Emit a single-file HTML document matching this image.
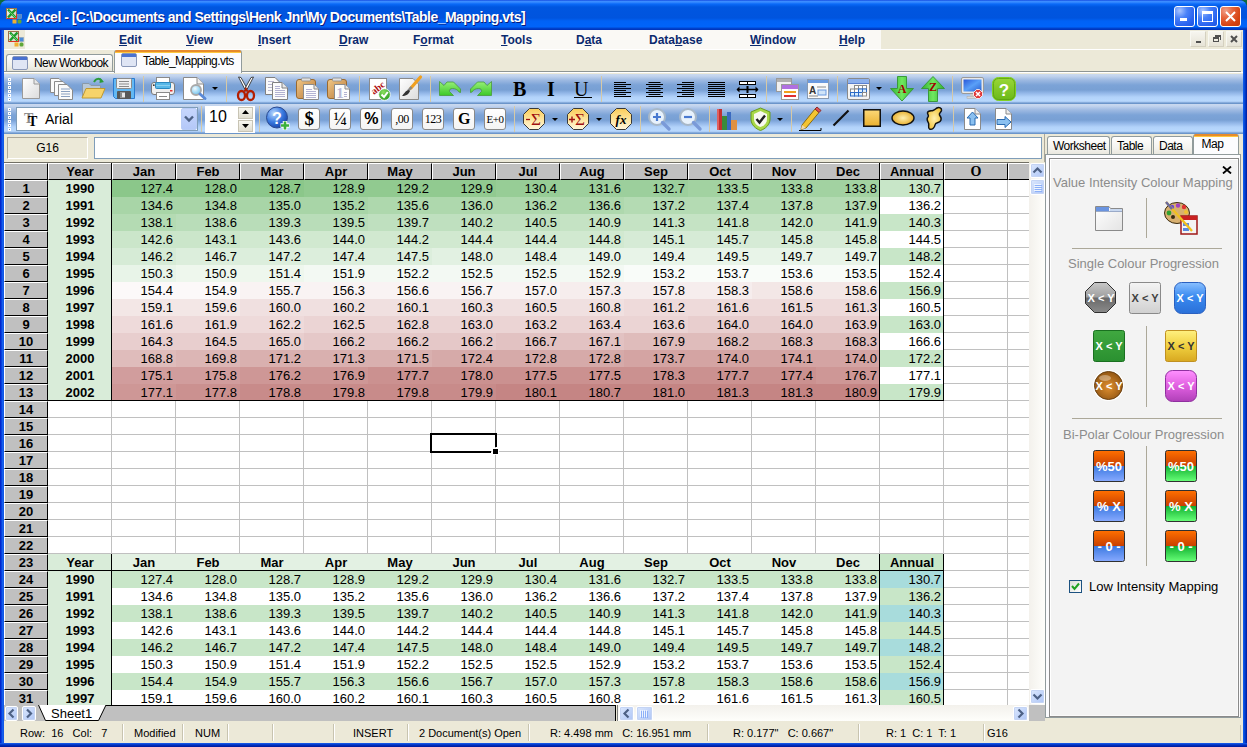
<!DOCTYPE html><html><head><meta charset="utf-8"><style>
*{margin:0;padding:0;box-sizing:border-box}
html,body{width:1247px;height:747px;overflow:hidden;background:#0d6a3e;font-family:"Liberation Sans",sans-serif;font-size:13px;color:#000}
.a{position:absolute}
.t{position:absolute;white-space:nowrap;line-height:1}
</style></head><body><div class="a" style="left:0px;top:0px;width:1247px;height:747px;border-radius:8px 8px 0 0;background:linear-gradient(90deg,#0019c4 0,#0a4ee6 2px,#1f6ff6 3px,#0842d6 4px,#0842d6 1243px,#1060f0 1243px,#0040d0 1245px,#001a9a 1247px)"></div>
<div class="a" style="left:0px;top:743px;width:1247px;height:4px;background:linear-gradient(#1a62f0,#0030c0 2px,#001a9a)"></div>
<div class="a" style="left:0px;top:0px;width:1247px;height:30px;border-radius:8px 8px 0 0;background:linear-gradient(#0838d8 0,#3d8cff 1px,#3a8cff 2px,#0a6af8 4px,#0056e0 7px,#0054de 18px,#0062f6 21px,#0064fa 27px,#0046d0 28px,#0030b8 30px)"></div>
<svg class="a" style="left:6px;top:8px" width="17" height="16" viewBox="0 0 17 16"><defs><linearGradient id="xs8" x1="0" y1="0" x2="1" y2="1"><stop offset="0" stop-color="#f4f8f0"/><stop offset="1" stop-color="#c8d0c0"/></linearGradient></defs>
<rect x="0.5" y="0.5" width="10" height="10" fill="url(#xs8)" stroke="#a0704a"/><path d="M1 10.5 H10.5 V6" stroke="#e03020" fill="none"/><path d="M2 1.5 L9.5 9.5 M9.5 1.5 L2 9.5" stroke="#1a9a2a" stroke-width="2.4"/><path d="M3 3 L10 10" stroke="#6ad06a" stroke-width="1"/>
<rect x="11.5" y="6.5" width="4" height="4" fill="#4a8ad8" stroke="#8aa0b8" stroke-width=".6"/><rect x="6.5" y="11.5" width="4" height="4" fill="#f0b030"/><rect x="11.5" y="11.5" width="4" height="4" rx="1.5" fill="#60a838"/></svg>
<div class="t" style="left:26px;top:9.5px;color:#fff;font-weight:bold;font-size:14px;text-shadow:1px 1px 0 #0a1a7a;letter-spacing:-0.52px">Accel - [C:\Documents and Settings\Henk Jnr\My Documents\Table_Mapping.vts]</div>
<div class="a" style="left:1174px;top:6px;width:21px;height:21px;border:1px solid #fff;border-radius:3px;background:radial-gradient(circle at 25% 20%,#a8c4ff 0,#4a82f8 35%,#2a64f0 70%,#1c54e0 100%)"></div>
<div class="a" style="left:1197px;top:6px;width:21px;height:21px;border:1px solid #fff;border-radius:3px;background:radial-gradient(circle at 25% 20%,#a8c4ff 0,#4a82f8 35%,#2a64f0 70%,#1c54e0 100%)"></div>
<div class="a" style="left:1220px;top:6px;width:21px;height:21px;border:1px solid #fff;border-radius:3px;background:radial-gradient(circle at 25% 20%,#f0a08a 0,#e6643c 35%,#d64312 70%,#c63a0a 100%)"></div>
<div class="a" style="left:1180px;top:18px;width:7px;height:3px;background:#fff"></div>
<div class="a" style="left:1202px;top:11px;width:11px;height:11px;border:1px solid #fff;border-top-width:3px"></div>
<svg class="a" style="left:1220px;top:6px" width="21" height="21"><path d="M6 6 L15 15 M15 6 L6 15" stroke="#fff" stroke-width="2"/></svg>
<div class="a" style="left:4px;top:30px;width:1239px;height:713px;background:#ece9d8"></div>
<div class="a" style="left:4px;top:30px;width:877px;height:19px;background:#faf9f5"></div>
<div class="a" style="left:4px;top:49px;width:1239px;height:1px;background:#fff"></div>
<div class="a" style="left:4px;top:30px;width:21px;height:19px;background:#ece9d8"></div>
<svg class="a" style="left:8px;top:31px" width="17" height="16" viewBox="0 0 17 16"><defs><linearGradient id="xs31" x1="0" y1="0" x2="1" y2="1"><stop offset="0" stop-color="#f4f8f0"/><stop offset="1" stop-color="#c8d0c0"/></linearGradient></defs>
<rect x="0.5" y="0.5" width="10" height="10" fill="url(#xs31)" stroke="#a0704a"/><path d="M1 10.5 H10.5 V6" stroke="#e03020" fill="none"/><path d="M2 1.5 L9.5 9.5 M9.5 1.5 L2 9.5" stroke="#1a9a2a" stroke-width="2.4"/><path d="M3 3 L10 10" stroke="#6ad06a" stroke-width="1"/>
<rect x="11.5" y="6.5" width="4" height="4" fill="#4a8ad8" stroke="#8aa0b8" stroke-width=".6"/><rect x="6.5" y="11.5" width="4" height="4" fill="#f0b030"/><rect x="11.5" y="11.5" width="4" height="4" rx="1.5" fill="#60a838"/></svg>
<div class="t" style="left:53px;top:34px;color:#0b2a6e;font-weight:bold;font-size:12px"><u>F</u>ile</div>
<div class="t" style="left:119px;top:34px;color:#0b2a6e;font-weight:bold;font-size:12px"><u>E</u>dit</div>
<div class="t" style="left:186px;top:34px;color:#0b2a6e;font-weight:bold;font-size:12px"><u>V</u>iew</div>
<div class="t" style="left:258px;top:34px;color:#0b2a6e;font-weight:bold;font-size:12px"><u>I</u>nsert</div>
<div class="t" style="left:339px;top:34px;color:#0b2a6e;font-weight:bold;font-size:12px"><u>D</u>raw</div>
<div class="t" style="left:413px;top:34px;color:#0b2a6e;font-weight:bold;font-size:12px">F<u>o</u>rmat</div>
<div class="t" style="left:501px;top:34px;color:#0b2a6e;font-weight:bold;font-size:12px"><u>T</u>ools</div>
<div class="t" style="left:576px;top:34px;color:#0b2a6e;font-weight:bold;font-size:12px">D<u>a</u>ta</div>
<div class="t" style="left:649px;top:34px;color:#0b2a6e;font-weight:bold;font-size:12px">Data<u>b</u>ase</div>
<div class="t" style="left:750px;top:34px;color:#0b2a6e;font-weight:bold;font-size:12px"><u>W</u>indow</div>
<div class="t" style="left:839px;top:34px;color:#0b2a6e;font-weight:bold;font-size:12px"><u>H</u>elp</div>
<div class="a" style="left:1190px;top:31px;width:16px;height:16px;background:linear-gradient(#f6f5ef,#e6e3d6);border:1px solid #f8f8f2;border-right-color:#d4d0c0;border-bottom-color:#d4d0c0"></div>
<div class="a" style="left:1208px;top:31px;width:16px;height:16px;background:linear-gradient(#f6f5ef,#e6e3d6);border:1px solid #f8f8f2;border-right-color:#d4d0c0;border-bottom-color:#d4d0c0"></div>
<div class="a" style="left:1226px;top:31px;width:16px;height:16px;background:linear-gradient(#f6f5ef,#e6e3d6);border:1px solid #f8f8f2;border-right-color:#d4d0c0;border-bottom-color:#d4d0c0"></div>
<div class="a" style="left:1196px;top:41px;width:5px;height:2px;background:#505050"></div>
<div class="a" style="left:1213px;top:37px;width:6px;height:5px;border:1px solid #505050;border-top-width:2px"></div>
<div class="a" style="left:1215px;top:35px;width:6px;height:5px;border-top:2px solid #505050;border-right:1px solid #505050"></div>
<svg class="a" style="left:1226px;top:31px" width="16" height="16"><path d="M5 5 L11 11 M11 5 L5 11" stroke="#505050" stroke-width="2"/></svg>
<div class="a" style="left:4px;top:71px;width:1237px;height:1px;background:#8e9594"></div>
<div class="a" style="left:4px;top:72px;width:1239px;height:1px;background:#fff"></div>
<div class="a" style="left:6px;top:54px;width:107px;height:17px;background:linear-gradient(#fefefe,#f0efe8 70%,#e6e3d8);border:1px solid #919b9c;border-bottom:none;border-radius:3px 3px 0 0"></div>
<svg class="a" style="left:12px;top:56px" width="16" height="14"><rect x="0.5" y="0.5" width="15" height="13" rx="1.5" fill="#dfe5f4" stroke="#8a98b8"/><rect x="1" y="1" width="14" height="3" fill="#4a72d0"/></svg>
<div class="t" style="left:34px;top:57px;font-size:12px;color:#000;letter-spacing:-0.6px">New Workbook</div>
<div class="a" style="left:114px;top:50px;width:128px;height:23px;background:#fcfcfe;border:1px solid #919b9c;border-bottom:none;border-radius:3px 3px 0 0"></div>
<div class="a" style="left:115px;top:50px;width:126px;height:2px;background:#e68b2c;border-radius:2px 2px 0 0"></div>
<div class="a" style="left:115px;top:52px;width:126px;height:1px;background:#ffc73c"></div>
<svg class="a" style="left:121px;top:53px" width="16" height="14"><rect x="0.5" y="0.5" width="15" height="13" rx="1.5" fill="#dfe5f4" stroke="#8a98b8"/><rect x="1" y="1" width="14" height="3" fill="#4a72d0"/></svg>
<div class="t" style="left:143px;top:55px;font-size:12px;color:#000;letter-spacing:-0.55px">Table_Mapping.vts</div>
<div class="a" style="left:4px;top:74px;width:1239px;height:30px;background:linear-gradient(#cad9ef 0,#c2d4ee 2px,#9ebae2 6px,#7ca3d7 11px,#78a0d4 16px,#92b6e8 19px,#b2d2fa 23px,#b8d8fd 27px,#a4c4ee 28px,#6b95ca 29px,#6b95ca 30px)"></div>
<div class="a" style="left:4px;top:104px;width:1239px;height:30px;background:linear-gradient(#cad9ef 0,#c2d4ee 2px,#9ebae2 6px,#7ca3d7 11px,#78a0d4 16px,#92b6e8 19px,#b2d2fa 23px,#b8d8fd 27px,#a4c4ee 28px,#6b95ca 29px,#6b95ca 30px)"></div>
<svg class="a" style="left:8px;top:78px" width="4" height="24"><rect x="0" y="0" width="3" height="3" fill="#fff"/><rect x="1" y="1" width="1" height="1" fill="#7890b0"/><rect x="0" y="4" width="3" height="3" fill="#fff"/><rect x="1" y="5" width="1" height="1" fill="#7890b0"/><rect x="0" y="8" width="3" height="3" fill="#fff"/><rect x="1" y="9" width="1" height="1" fill="#7890b0"/><rect x="0" y="12" width="3" height="3" fill="#fff"/><rect x="1" y="13" width="1" height="1" fill="#7890b0"/><rect x="0" y="16" width="3" height="3" fill="#fff"/><rect x="1" y="17" width="1" height="1" fill="#7890b0"/><rect x="0" y="20" width="3" height="3" fill="#fff"/><rect x="1" y="21" width="1" height="1" fill="#7890b0"/></svg>
<svg class="a" style="left:8px;top:108px" width="4" height="24"><rect x="0" y="0" width="3" height="3" fill="#fff"/><rect x="1" y="1" width="1" height="1" fill="#7890b0"/><rect x="0" y="4" width="3" height="3" fill="#fff"/><rect x="1" y="5" width="1" height="1" fill="#7890b0"/><rect x="0" y="8" width="3" height="3" fill="#fff"/><rect x="1" y="9" width="1" height="1" fill="#7890b0"/><rect x="0" y="12" width="3" height="3" fill="#fff"/><rect x="1" y="13" width="1" height="1" fill="#7890b0"/><rect x="0" y="16" width="3" height="3" fill="#fff"/><rect x="1" y="17" width="1" height="1" fill="#7890b0"/><rect x="0" y="20" width="3" height="3" fill="#fff"/><rect x="1" y="21" width="1" height="1" fill="#7890b0"/></svg>
<div class="a" style="left:143px;top:76px;width:1px;height:26px;background:#d6c9a6"></div>
<div class="a" style="left:226px;top:76px;width:1px;height:26px;background:#d6c9a6"></div>
<div class="a" style="left:359px;top:76px;width:1px;height:26px;background:#d6c9a6"></div>
<div class="a" style="left:430px;top:76px;width:1px;height:26px;background:#d6c9a6"></div>
<div class="a" style="left:601px;top:76px;width:1px;height:26px;background:#d6c9a6"></div>
<div class="a" style="left:766px;top:76px;width:1px;height:26px;background:#d6c9a6"></div>
<div class="a" style="left:837px;top:76px;width:1px;height:26px;background:#d6c9a6"></div>
<div class="a" style="left:952px;top:76px;width:1px;height:26px;background:#d6c9a6"></div>
<div class="a" style="left:201px;top:106px;width:1px;height:26px;background:#d6c9a6"></div>
<div class="a" style="left:259px;top:106px;width:1px;height:26px;background:#d6c9a6"></div>
<div class="a" style="left:514px;top:106px;width:1px;height:26px;background:#d6c9a6"></div>
<div class="a" style="left:640px;top:106px;width:1px;height:26px;background:#d6c9a6"></div>
<div class="a" style="left:709px;top:106px;width:1px;height:26px;background:#d6c9a6"></div>
<div class="a" style="left:791px;top:106px;width:1px;height:26px;background:#d6c9a6"></div>
<div class="a" style="left:953px;top:106px;width:1px;height:26px;background:#d6c9a6"></div>
<svg class="a" style="left:21px;top:77px;overflow:visible" width="20" height="23" viewBox="0 0 20 23"><defs><linearGradient id="pg" x1="0" y1="0" x2="1" y2="1"><stop offset="0" stop-color="#fff"/><stop offset="1" stop-color="#dcdcdc"/></linearGradient></defs><path d="M1.5 1.5 H13 L18.5 7 V21.5 H1.5 Z" fill="url(#pg)" stroke="#9a9a9a"/><path d="M13 1.5 V7 H18.5" fill="#e8e8e8" stroke="#9a9a9a"/></svg>
<svg class="a" style="left:49px;top:77px;overflow:visible" width="25" height="23" viewBox="0 0 25 23"><path d="M1.5 1.5 H10 L14 5.5 V15.5 H1.5 Z" fill="#fafafa" stroke="#8a8a8a"/><path d="M5.5 4.5 H14 L18 8.5 V18.5 H5.5 Z" fill="#fafafa" stroke="#8a8a8a"/><path d="M9.5 7.5 H18 L23.5 13 V22.5 H9.5 Z" fill="#fafafa" stroke="#8a8a8a"/><path d="M12 12h9M12 14.5h9M12 17h9M12 19.5h9" stroke="#8aa0c0"/></svg>
<svg class="a" style="left:81px;top:77px;overflow:visible" width="25" height="23" viewBox="0 0 25 23"><path d="M1.5 6.5 H8 L10 8.5 H19.5 V20.5 H1.5 Z" fill="#b8c8d8" stroke="#8a9aa8"/><path d="M1 21 L5 11.5 H24 L20 21 Z" fill="#f6d36a" stroke="#c09a30"/><path d="M13 5 C15 1 19 1 21 4" stroke="#2a9a3a" stroke-width="2" fill="none"/><path d="M19 1 L23 5 L18.5 6 Z" fill="#2a9a3a"/></svg>
<svg class="a" style="left:112px;top:77px;overflow:visible" width="24" height="23" viewBox="0 0 24 23"><path d="M1.5 1.5 H22.5 V21.5 H3.5 L1.5 19.5 Z" fill="#62b8f4" stroke="#2a7ad0"/><rect x="4.5" y="1.5" width="15" height="10" rx="1" fill="#f0f0f0" stroke="#8a8a8a"/><path d="M7 4.5h10M7 7h10M7 9.5h10" stroke="#8a8a8a"/><rect x="5" y="14" width="14" height="8" rx="1" fill="#585858"/><rect x="8" y="15.5" width="5" height="5" fill="#e8e8e8"/><rect x="8" y="15.5" width="2" height="5" fill="#888"/></svg>
<svg class="a" style="left:151px;top:77px;overflow:visible" width="24" height="23" viewBox="0 0 24 23"><rect x="5.5" y="0.5" width="13" height="7" fill="#fff" stroke="#8a8a8a"/><rect x="0.5" y="5.5" width="23" height="12" rx="2.5" fill="#f0f0f0" stroke="#7a7a7a"/><rect x="4.5" y="5.5" width="15" height="6" rx="1" fill="#58b8e8" stroke="#2a88c0"/><path d="M5 8.5 H19" stroke="#8ad0f0"/><rect x="5.5" y="15.5" width="13" height="7" fill="#fff" stroke="#8a8a8a"/><path d="M8 19.5h8" stroke="#888"/><rect x="19" y="13" width="2.5" height="1.5" fill="#e03030"/><circle cx="2.8" cy="8.2" r="0.9" fill="#333"/></svg>
<svg class="a" style="left:183px;top:77px;overflow:visible" width="25" height="24" viewBox="0 0 25 24"><path d="M0.5 0.5 H14 L20.5 7 V22.5 H0.5 Z" fill="#fff" stroke="#8a8a8a"/><path d="M14 0.5 V7 H20.5" fill="#eee" stroke="#8a8a8a"/><defs><radialGradient id="lens" cx=".4" cy=".35" r=".6"><stop offset="0" stop-color="#f0faff"/><stop offset="1" stop-color="#7ac8f0"/></radialGradient></defs><circle cx="13" cy="13" r="5" fill="url(#lens)" stroke="#a8a8a8" stroke-width="1.8"/><path d="M17 17 L22 21.5" stroke="#5a8ad8" stroke-width="3" stroke-linecap="round"/></svg>
<svg class="a" style="left:212px;top:87px;overflow:visible" width="6" height="3" viewBox="0 0 6 3"><path d="M0 0 H6 L3 3 Z" fill="#000"/></svg>
<svg class="a" style="left:236px;top:76px;overflow:visible" width="20" height="26" viewBox="0 0 20 26"><path d="M2.5 1 L5 1.5 L11 12.5 L9 13.5 Z" fill="#fff" stroke="#333" stroke-width="0.9"/><path d="M17.5 1 L15 1.5 L9 12.5 L11 13.5 Z" fill="#fff" stroke="#333" stroke-width="0.9"/><ellipse cx="5.5" cy="19.5" rx="3.5" ry="4.5" fill="none" stroke="#b41e00" stroke-width="2.3"/><ellipse cx="14.5" cy="19.5" rx="3.5" ry="4.5" fill="none" stroke="#b41e00" stroke-width="2.3"/><path d="M8.5 15.5 L10 13 L11.5 15.5" stroke="#b41e00" stroke-width="2" fill="none"/></svg>
<svg class="a" style="left:265px;top:77px;overflow:visible" width="24" height="23" viewBox="0 0 24 23"><path d="M0.5 0.5 H10 L14 4.5 V17.5 H0.5 Z" fill="#fafafa" stroke="#808080"/><path d="M3 4.5h6M3 7.5h6M3 10.5h6M3 13.5h6" stroke="#b8b8d0"/><path d="M7.5 5.5 H17 L22.5 11 V22.5 H7.5 Z" fill="#fbfbfb" stroke="#808080"/><path d="M17 5.5 V11 H22.5" fill="#e8e8e8" stroke="#808080"/><path d="M10 9.5h5M10 11.5h5M10 13.5h10M10 15.5h10M10 17.5h10M10 19.5h10" stroke="#a0a0c8" stroke-width="0.8"/></svg>
<svg class="a" style="left:296px;top:78px;overflow:visible" width="24" height="23" viewBox="0 0 24 23"><defs><linearGradient id="pc296" x1="0" y1="0" x2="1" y2="1"><stop offset="0" stop-color="#f0c888"/><stop offset="1" stop-color="#b87838"/></linearGradient></defs><rect x="0.5" y="1.5" width="19" height="19" rx="2.5" fill="url(#pc296)" stroke="#9a6a30"/><rect x="5.5" y="0" width="9" height="3" rx="1" fill="#e0e0e0" stroke="#8a8a8a" stroke-width=".8"/><path d="M7.5 6.5 H18 L22.5 11 V21.5 H7.5 Z" fill="#fcfcfc" stroke="#8a8a8a"/><path d="M18 6.5 V11 H22.5" fill="#e8e8e8" stroke="#8a8a8a"/><path d="M10 11.5h6M10 13.5h10M10 15.5h10M10 17.5h10M10 19.5h10" stroke="#a0a0c8" stroke-width=".8"/></svg>
<svg class="a" style="left:327px;top:78px;overflow:visible" width="24" height="23" viewBox="0 0 24 23"><defs><linearGradient id="pc327" x1="0" y1="0" x2="1" y2="1"><stop offset="0" stop-color="#f0c888"/><stop offset="1" stop-color="#b87838"/></linearGradient></defs><rect x="0.5" y="1.5" width="19" height="19" rx="2.5" fill="url(#pc327)" stroke="#9a6a30"/><rect x="5.5" y="0" width="9" height="3" rx="1" fill="#e0e0e0" stroke="#8a8a8a" stroke-width=".8"/><path d="M7.5 6.5 H18 L22.5 11 V21.5 H7.5 Z" fill="#fcfcfc" stroke="#8a8a8a"/><path d="M18 6.5 V11 H22.5" fill="#e8e8e8" stroke="#8a8a8a"/><text x="13" y="20" font-family="Liberation Serif" font-weight="bold" font-size="15" fill="#b8b8d8" text-anchor="middle">1</text><path d="M17 14.5h3M17 16.5h3M17 18.5h3" stroke="#a0a0c8" stroke-width=".8"/></svg>
<svg class="a" style="left:369px;top:78px;overflow:visible" width="24" height="23" viewBox="0 0 24 23"><rect x="0.5" y="0.5" width="17" height="21" fill="#fff" stroke="#8a8a8a"/><text x="9" y="13" font-family="Liberation Serif" font-weight="bold" font-size="10" fill="#b01010" text-anchor="middle" transform="rotate(-38 9 10)">abc</text><defs><radialGradient id="ck" cx=".4" cy=".3" r=".7"><stop offset="0" stop-color="#8ae060"/><stop offset="1" stop-color="#2a9a20"/></radialGradient></defs><circle cx="15.5" cy="16.5" r="5.8" fill="url(#ck)" stroke="#fff" stroke-width=".8"/><path d="M12.5 16.5 L15 19 L18.8 14" stroke="#fff" stroke-width="2" fill="none"/></svg>
<svg class="a" style="left:399px;top:76px;overflow:visible" width="23" height="25" viewBox="0 0 23 25"><defs><linearGradient id="fp" x1="0" y1="0" x2="1" y2="1"><stop offset="0" stop-color="#fff"/><stop offset="1" stop-color="#dcdcdc"/></linearGradient></defs><path d="M0.5 2.5 H14 L19.5 8 V23.5 H0.5 Z" fill="url(#fp)" stroke="#8a8a8a"/><path d="M21.5 1 L12 12" stroke="#f0a020" stroke-width="3.2" stroke-linecap="round"/><path d="M12.5 11 L9 15" stroke="#888" stroke-width="2.6"/><path d="M9.5 14 C6 15 5 18 3 20 C7 20 10 18 11 15 Z" fill="#333"/></svg>
<svg width="0" height="0" style="position:absolute"><defs><linearGradient id="ug" x1="0" y1="0" x2="0" y2="1"><stop offset="0" stop-color="#98f078"/><stop offset="1" stop-color="#3cc828"/></linearGradient></defs></svg>
<svg class="a" style="left:439px;top:81px;overflow:visible" width="23" height="16" viewBox="0 0 23 16"><path d="M0.5 0.5 L5 4.5 L8 1 H14.5 L21.5 8 V11.5 L20 11 C18.5 8.5 16 7.5 13.5 7.5 C11.5 7.5 10 8.5 10.5 10.5 L14.5 14.5 H0.5 Z" fill="url(#ug)" stroke="#4a9a3a" stroke-width="0.8"/></svg>
<svg class="a" style="left:470px;top:81px;overflow:visible" width="23" height="16" viewBox="0 0 23 16"><g transform="translate(22 0) scale(-1 1)"><path d="M0.5 0.5 L5 4.5 L8 1 H14.5 L21.5 8 V11.5 L20 11 C18.5 8.5 16 7.5 13.5 7.5 C11.5 7.5 10 8.5 10.5 10.5 L14.5 14.5 H0.5 Z" fill="url(#ug)" stroke="#4a9a3a" stroke-width="0.8"/></g></svg>
<div class="t" style="left:513px;top:79px;font-family:&#39;Liberation Serif&#39;,serif;font-weight:bold;font-size:20px">B</div>
<div class="t" style="left:547px;top:79px;font-family:&#39;Liberation Serif&#39;,serif;font-weight:bold;font-size:20px">I</div>
<div class="t" style="left:574px;top:79px;font-family:&#39;Liberation Serif&#39;,serif;font-size:20px">U</div>
<div class="a" style="left:574px;top:97px;width:18px;height:1px;background:#000"></div>
<svg class="a" style="left:614px;top:82px;overflow:visible" width="17" height="15" viewBox="0 0 17 15"><rect x="0" y="0" width="12" height="1" fill="#000"/><rect x="0" y="2" width="17" height="1" fill="#000"/><rect x="0" y="4" width="12" height="1" fill="#000"/><rect x="0" y="6" width="17" height="1" fill="#000"/><rect x="0" y="8" width="12" height="1" fill="#000"/><rect x="0" y="10" width="17" height="1" fill="#000"/><rect x="0" y="12" width="12" height="1" fill="#000"/><rect x="0" y="14" width="17" height="1" fill="#000"/></svg>
<svg class="a" style="left:646px;top:82px;overflow:visible" width="17" height="15" viewBox="0 0 17 15"><rect x="2.5" y="0" width="12" height="1" fill="#000"/><rect x="0.0" y="2" width="17" height="1" fill="#000"/><rect x="2.5" y="4" width="12" height="1" fill="#000"/><rect x="0.0" y="6" width="17" height="1" fill="#000"/><rect x="2.5" y="8" width="12" height="1" fill="#000"/><rect x="0.0" y="10" width="17" height="1" fill="#000"/><rect x="2.5" y="12" width="12" height="1" fill="#000"/><rect x="0.0" y="14" width="17" height="1" fill="#000"/></svg>
<svg class="a" style="left:677px;top:82px;overflow:visible" width="17" height="15" viewBox="0 0 17 15"><rect x="5" y="0" width="12" height="1" fill="#000"/><rect x="0" y="2" width="17" height="1" fill="#000"/><rect x="5" y="4" width="12" height="1" fill="#000"/><rect x="0" y="6" width="17" height="1" fill="#000"/><rect x="5" y="8" width="12" height="1" fill="#000"/><rect x="0" y="10" width="17" height="1" fill="#000"/><rect x="5" y="12" width="12" height="1" fill="#000"/><rect x="0" y="14" width="17" height="1" fill="#000"/></svg>
<svg class="a" style="left:708px;top:82px;overflow:visible" width="17" height="15" viewBox="0 0 17 15"><rect x="0" y="0" width="17" height="1" fill="#000"/><rect x="0" y="2" width="17" height="1" fill="#000"/><rect x="0" y="4" width="17" height="1" fill="#000"/><rect x="0" y="6" width="17" height="1" fill="#000"/><rect x="0" y="8" width="17" height="1" fill="#000"/><rect x="0" y="10" width="17" height="1" fill="#000"/><rect x="0" y="12" width="17" height="1" fill="#000"/><rect x="0" y="14" width="17" height="1" fill="#000"/></svg>
<svg class="a" style="left:736px;top:81px;overflow:visible" width="23" height="17" viewBox="0 0 23 17"><rect x="3.5" y="0.5" width="16" height="3" fill="#fff" stroke="#000"/><rect x="3.5" y="13.5" width="16" height="3" fill="#fff" stroke="#000"/><path d="M11.5 0 V4 M11.5 13 V17" stroke="#000"/><path d="M1 8.5 H22" stroke="#000" stroke-width="1.4"/><path d="M0.5 8.5 L3.5 5.5 V11.5 Z M22.5 8.5 L19.5 5.5 V11.5 Z" fill="#000"/><rect x="10.5" y="5" width="2" height="7" fill="#000"/></svg>
<svg class="a" style="left:775px;top:77px;overflow:visible" width="24" height="24" viewBox="0 0 24 24"><rect x="1.5" y="1.5" width="15" height="13" fill="#f0f0f0" stroke="#9a9a9a"/><rect x="2" y="2" width="14" height="3" fill="#b0b0b0"/><rect x="6.5" y="7.5" width="17" height="15" fill="#fff" stroke="#9a9a9a"/><rect x="7" y="8" width="16" height="4" fill="#b070e0"/><rect x="9" y="14" width="12" height="2" fill="#f0a020"/><rect x="9" y="18" width="12" height="2" fill="#e03030"/></svg>
<svg class="a" style="left:806px;top:77px;overflow:visible" width="24" height="24" viewBox="0 0 24 24"><rect x="1.5" y="2.5" width="21" height="19" fill="#fafafa" stroke="#8a9ab0"/><rect x="2" y="3" width="20" height="3" fill="#6a9ae0"/><text x="3" y="17" font-family="Liberation Sans" font-weight="bold" font-size="10" fill="#333">A</text><path d="M11 10h9M3 19h9" stroke="#8a8a8a"/><rect x="12" y="13" width="8" height="5" fill="#d0e4f8" stroke="#6a9ae0"/></svg>
<svg class="a" style="left:847px;top:78px;overflow:visible" width="23" height="22" viewBox="0 0 23 22"><rect x="0.5" y="0.5" width="22" height="21" rx="1.5" fill="#f4f4f4" stroke="#8a8a8a"/><rect x="1" y="1" width="21" height="4" fill="#8cb0ec"/><path d="M1 5.5 H22" stroke="#5a80d0"/><rect x="7.5" y="7.5" width="4" height="3.5" fill="#fff" stroke="#8a8a8a" stroke-width="1"/><rect x="11.5" y="7.5" width="4" height="3.5" fill="#fff" stroke="#8a8a8a" stroke-width="1"/><rect x="15.5" y="7.5" width="4" height="3.5" fill="#fff" stroke="#8a8a8a" stroke-width="1"/><rect x="3.5" y="11.0" width="4" height="3.5" fill="#fff" stroke="#8a8a8a" stroke-width="1"/><rect x="7.5" y="11.0" width="4" height="3.5" fill="#fff" stroke="#8a8a8a" stroke-width="1"/><rect x="11.5" y="11.0" width="4" height="3.5" fill="#d8ecfc" stroke="#2a6ac8" stroke-width="1"/><rect x="15.5" y="11.0" width="4" height="3.5" fill="#d8ecfc" stroke="#2a6ac8" stroke-width="1"/><rect x="3.5" y="14.5" width="4" height="3.5" fill="#d8ecfc" stroke="#2a6ac8" stroke-width="1"/><rect x="7.5" y="14.5" width="4" height="3.5" fill="#d8ecfc" stroke="#2a6ac8" stroke-width="1"/><rect x="11.5" y="14.5" width="4" height="3.5" fill="#d8ecfc" stroke="#2a6ac8" stroke-width="1"/><rect x="15.5" y="14.5" width="4" height="3.5" fill="#fff" stroke="#8a8a8a" stroke-width="1"/></svg>
<svg class="a" style="left:876px;top:87px;overflow:visible" width="6" height="3" viewBox="0 0 6 3"><path d="M0 0 H6 L3 3 Z" fill="#000"/></svg>
<svg class="a" style="left:890px;top:76px;overflow:visible" width="25" height="26" viewBox="0 0 25 26"><defs><linearGradient id="sg" x1="0" y1="0" x2="1" y2="0"><stop offset="0" stop-color="#30b030"/><stop offset=".5" stop-color="#70e860"/><stop offset="1" stop-color="#30b030"/></linearGradient></defs><path d="M7.5 0.5 H16.5 V12.5 H23.5 L12 25 L0.5 12.5 H7.5 Z" fill="url(#sg)" stroke="#3a9a3a"/><text x="12" y="17" font-family="Liberation Serif" font-weight="bold" font-size="12" fill="#a00000" text-anchor="middle">A</text></svg>
<svg class="a" style="left:921px;top:76px;overflow:visible" width="25" height="26" viewBox="0 0 25 26"><path d="M7.5 25.5 H16.5 V12.5 H23.5 L12 0.5 L0.5 12.5 H7.5 Z" fill="url(#sg)" stroke="#3a9a3a"/><text x="12" y="15" font-family="Liberation Serif" font-weight="bold" font-size="12" fill="#a00000" text-anchor="middle">Z</text></svg>
<svg class="a" style="left:961px;top:77px;overflow:visible" width="25" height="24" viewBox="0 0 25 24"><defs><linearGradient id="scr" x1="0" y1="0" x2="1" y2="1"><stop offset="0" stop-color="#2a58d8"/><stop offset=".5" stop-color="#5aa0f8"/><stop offset="1" stop-color="#2a60d0"/></linearGradient></defs><rect x="0.5" y="0.5" width="22" height="16" rx="1.5" fill="#e8e8e8" stroke="#9a9a9a"/><rect x="2.5" y="2.5" width="18" height="12" fill="url(#scr)"/><rect x="9" y="17" width="5" height="3" fill="#c8c8c8"/><rect x="6" y="19.5" width="11" height="2" fill="#d8d8d8" stroke="#aaa" stroke-width=".5"/><path d="M15.5 12.5 L18.5 12.5 L21.5 15.5 V18.5 L18.5 21.5 H15.5 L12.5 18.5 V15.5 Z" fill="#e03838" stroke="#fff" stroke-width=".8"/><path d="M15 15 L19 19 M19 15 L15 19" stroke="#fff" stroke-width="1.6"/></svg>
<svg class="a" style="left:992px;top:77px;overflow:visible" width="24" height="24" viewBox="0 0 24 24"><defs><linearGradient id="hg" x1="0" y1="0" x2="0" y2="1"><stop offset="0" stop-color="#9ad838"/><stop offset="1" stop-color="#6ab818"/></linearGradient></defs><rect x="0.5" y="0.5" width="23" height="23" rx="6" fill="url(#hg)" stroke="#80d020"/><rect x="1.5" y="1.5" width="21" height="21" rx="5" fill="none" stroke="#5aa010" stroke-width=".8"/><text x="12" y="19" font-family="Liberation Sans" font-weight="bold" font-size="17" fill="#fff" text-anchor="middle">?</text></svg>
<div class="a" style="left:16px;top:107px;width:182px;height:24px;background:#fff;border:1px solid #7f9db9"></div>
<div class="a" style="left:181px;top:108px;width:16px;height:22px;background:linear-gradient(#c6d6fc,#b4c8f8);border:1px solid #b8ccf6;border-radius:2px"></div>
<svg class="a" style="left:184px;top:115px;overflow:visible" width="10" height="7" viewBox="0 0 10 7"><path d="M1 1.5 L5 5.5 L9 1.5" stroke="#4d6185" stroke-width="2.4" fill="none"/></svg>
<div class="t" style="left:24px;top:112px;font-family:&#39;Liberation Serif&#39;,serif;font-size:14px;font-weight:bold;color:#8a8a8a">T</div>
<div class="t" style="left:28px;top:115px;font-family:&#39;Liberation Serif&#39;,serif;font-size:14px;font-weight:bold;color:#000">T</div>
<div class="t" style="left:45px;top:112px;font-size:14px;color:#000">Arial</div>
<div class="a" style="left:205px;top:106px;width:50px;height:27px;background:#fff"></div>
<div class="t" style="left:209px;top:109px;font-size:16px;color:#000">10</div>
<div class="a" style="left:238px;top:107px;width:15px;height:12px;background:linear-gradient(#f8f7f0,#e0ddd0);border:1px solid #c8c4b4"></div>
<div class="a" style="left:238px;top:120px;width:15px;height:12px;background:linear-gradient(#f8f7f0,#e0ddd0);border:1px solid #c8c4b4"></div>
<svg class="a" style="left:242px;top:110px;overflow:visible" width="7" height="4" viewBox="0 0 7 4"><path d="M0 4 L3.5 0 L7 4 Z" fill="#000"/></svg>
<svg class="a" style="left:242px;top:124px;overflow:visible" width="7" height="4" viewBox="0 0 7 4"><path d="M0 0 L3.5 4 L7 0 Z" fill="#000"/></svg>
<svg class="a" style="left:266px;top:106px;overflow:visible" width="24" height="25" viewBox="0 0 24 25"><defs><radialGradient id="hb" cx=".35" cy=".3" r=".7"><stop offset="0" stop-color="#b8d8ff"/><stop offset=".6" stop-color="#3a7ae0"/><stop offset="1" stop-color="#1a4ab0"/></radialGradient></defs><circle cx="11" cy="11.5" r="10.5" fill="url(#hb)" stroke="#2a4a90"/><text x="11" y="18" font-family="Liberation Sans" font-weight="bold" font-size="16" fill="#fff" text-anchor="middle">?</text><path d="M19 15 V24 M14.5 19.5 H23.5" stroke="#fff" stroke-width="4.5"/><path d="M19 15.5 V23.5 M15 19.5 H23" stroke="#3ab03a" stroke-width="2.6"/></svg>
<div class="a" style="left:298px;top:108px;width:22px;height:22px;background:linear-gradient(#fff,#f4f4f4);border:1px solid #8a8a8a;border-radius:3px"></div>
<div class="a" style="left:298px;top:108px;width:22px;height:22px;line-height:22px;text-align:center;font-family:'Liberation Serif',serif;font-size:19px;font-weight:bold;white-space:nowrap;letter-spacing:-0.5px">$</div>
<div class="a" style="left:329px;top:108px;width:22px;height:22px;background:linear-gradient(#fff,#f4f4f4);border:1px solid #8a8a8a;border-radius:3px"></div>
<div class="a" style="left:329px;top:108px;width:22px;height:22px;line-height:22px;text-align:center;font-family:'Liberation Serif',serif;font-size:18px;font-weight:normal;white-space:nowrap;letter-spacing:-0.5px">¼</div>
<div class="a" style="left:360px;top:108px;width:22px;height:22px;background:linear-gradient(#fff,#f4f4f4);border:1px solid #8a8a8a;border-radius:3px"></div>
<div class="a" style="left:360px;top:108px;width:22px;height:22px;line-height:22px;text-align:center;font-family:'Liberation Sans',sans-serif;font-size:16px;font-weight:bold;white-space:nowrap;letter-spacing:-0.5px">%</div>
<div class="a" style="left:391px;top:108px;width:22px;height:22px;background:linear-gradient(#fff,#f4f4f4);border:1px solid #8a8a8a;border-radius:3px"></div>
<div class="a" style="left:391px;top:108px;width:22px;height:22px;line-height:22px;text-align:center;font-family:'Liberation Serif',serif;font-size:12px;font-weight:normal;white-space:nowrap;letter-spacing:-0.5px">,00</div>
<div class="a" style="left:422px;top:108px;width:22px;height:22px;background:linear-gradient(#fff,#f4f4f4);border:1px solid #8a8a8a;border-radius:3px"></div>
<div class="a" style="left:422px;top:108px;width:22px;height:22px;line-height:22px;text-align:center;font-family:'Liberation Serif',serif;font-size:12px;font-weight:normal;white-space:nowrap;letter-spacing:-0.5px">123</div>
<div class="a" style="left:453px;top:108px;width:22px;height:22px;background:linear-gradient(#fff,#f4f4f4);border:1px solid #8a8a8a;border-radius:3px"></div>
<div class="a" style="left:453px;top:108px;width:22px;height:22px;line-height:22px;text-align:center;font-family:'Liberation Serif',serif;font-size:16px;font-weight:bold;white-space:nowrap;letter-spacing:-0.5px">G</div>
<div class="a" style="left:484px;top:108px;width:22px;height:22px;background:linear-gradient(#fff,#f4f4f4);border:1px solid #8a8a8a;border-radius:3px"></div>
<div class="a" style="left:484px;top:108px;width:22px;height:22px;line-height:22px;text-align:center;font-family:'Liberation Serif',serif;font-size:11px;font-weight:normal;white-space:nowrap;letter-spacing:-0.5px">E+0</div>
<svg class="a" style="left:523px;top:108px;overflow:visible" width="22" height="22" viewBox="0 0 22 22"><defs><linearGradient id="og523" x1="0" y1="0" x2="0" y2="1"><stop offset="0" stop-color="#fbcc58"/><stop offset=".5" stop-color="#fde49c"/><stop offset="1" stop-color="#fff6dc"/></linearGradient></defs><path d="M6.5 0.5 H15.5 L21.5 6.5 V15.5 L15.5 21.5 H6.5 L0.5 15.5 V6.5 Z" fill="url(#og523)" stroke="#3a3a3a"/><path d="M3 11.5 H7" stroke="#a01010" stroke-width="1.3"/><text x="13" y="17" font-family="Liberation Serif" font-size="17" fill="#a01010" text-anchor="middle">Σ</text></svg>
<svg class="a" style="left:552px;top:118px;overflow:visible" width="6" height="3" viewBox="0 0 6 3"><path d="M0 0 H6 L3 3 Z" fill="#000"/></svg>
<svg class="a" style="left:567px;top:108px;overflow:visible" width="22" height="22" viewBox="0 0 22 22"><defs><linearGradient id="og567" x1="0" y1="0" x2="0" y2="1"><stop offset="0" stop-color="#fbcc58"/><stop offset=".5" stop-color="#fde49c"/><stop offset="1" stop-color="#fff6dc"/></linearGradient></defs><path d="M6.5 0.5 H15.5 L21.5 6.5 V15.5 L15.5 21.5 H6.5 L0.5 15.5 V6.5 Z" fill="url(#og567)" stroke="#3a3a3a"/><path d="M2 11.5 H8 M5 8.5 V14.5" stroke="#a01010" stroke-width="1.4"/><text x="13" y="17" font-family="Liberation Serif" font-size="17" fill="#a01010" text-anchor="middle">Σ</text></svg>
<svg class="a" style="left:596px;top:118px;overflow:visible" width="6" height="3" viewBox="0 0 6 3"><path d="M0 0 H6 L3 3 Z" fill="#000"/></svg>
<svg class="a" style="left:610px;top:108px;overflow:visible" width="22" height="22" viewBox="0 0 22 22"><defs><linearGradient id="og610" x1="0" y1="0" x2="0" y2="1"><stop offset="0" stop-color="#fbcc58"/><stop offset=".5" stop-color="#fde49c"/><stop offset="1" stop-color="#fff6dc"/></linearGradient></defs><path d="M6.5 0.5 H15.5 L21.5 6.5 V15.5 L15.5 21.5 H6.5 L0.5 15.5 V6.5 Z" fill="url(#og610)" stroke="#3a3a3a"/><text x="11" y="15.5" font-family="Liberation Serif" font-weight="bold" font-style="italic" font-size="13" fill="#000" text-anchor="middle">fx</text></svg>
<svg class="a" style="left:647px;top:107px;overflow:visible" width="24" height="24" viewBox="0 0 24 24"><circle cx="10" cy="10" r="8" fill="#e8f2fc" stroke="#a8b8c8" stroke-width="2"/><path d="M6 10 H14 M10 6 V14" stroke="#4a7ad0" stroke-width="2.2"/><path d="M15.5 15.5 L22 22" stroke="#7a9ad8" stroke-width="3.4" stroke-linecap="round"/></svg>
<svg class="a" style="left:678px;top:107px;overflow:visible" width="24" height="24" viewBox="0 0 24 24"><circle cx="10" cy="10" r="8" fill="#e8f2fc" stroke="#a8b8c8" stroke-width="2"/><path d="M6 10 H14" stroke="#4a7ad0" stroke-width="2.2"/><path d="M15.5 15.5 L22 22" stroke="#7a9ad8" stroke-width="3.4" stroke-linecap="round"/></svg>
<svg class="a" style="left:716px;top:107px;overflow:visible" width="24" height="24" viewBox="0 0 24 24"><rect x="1" y="2" width="5" height="21" fill="#c03030"/><rect x="6" y="9" width="5" height="14" fill="#3a8a3a"/><rect x="11" y="5" width="4" height="18" fill="#3a6ac0"/><rect x="15" y="13" width="6" height="10" fill="#e09040"/><rect x="1" y="2" width="2" height="21" fill="#e06060"/></svg>
<svg class="a" style="left:750px;top:107px;overflow:visible" width="21" height="24" viewBox="0 0 21 24"><path d="M10.5 1 L20 5 V12 C20 18 15 22 10.5 23.5 C6 22 1 18 1 12 V5 Z" fill="#a8d848" stroke="#6a9a20"/><path d="M10.5 4 L17 7 V12 C17 16 14 19 10.5 20 C7 19 4 16 4 12 V7 Z" fill="#f8f8f0"/><path d="M6.5 12 L9.5 15.5 L15 8.5" stroke="#222" stroke-width="2.4" fill="none"/></svg>
<svg class="a" style="left:777px;top:118px;overflow:visible" width="6" height="3" viewBox="0 0 6 3"><path d="M0 0 H6 L3 3 Z" fill="#000"/></svg>
<svg class="a" style="left:798px;top:106px;overflow:visible" width="24" height="26" viewBox="0 0 24 26"><path d="M4 19 L17 3 L21 6.5 L8 22 L3 23.5 Z" fill="#f4c430" stroke="#8a6a10"/><path d="M17 3 L19 1 L23 4.5 L21 6.5 Z" fill="#e05050" stroke="#8a2a2a"/><path d="M3 23.5 L4 19 L8 22 Z" fill="#f0d8b0"/><path d="M1 24.5 H23 V22" stroke="#000" stroke-width="1" fill="none"/></svg>
<svg class="a" style="left:832px;top:109px;overflow:visible" width="18" height="18" viewBox="0 0 18 18"><path d="M1.5 16.5 L16.5 1.5" stroke="#111" stroke-width="2.2"/></svg>
<svg class="a" style="left:863px;top:109px;overflow:visible" width="18" height="18" viewBox="0 0 18 18"><defs><linearGradient id="rg" x1="0" y1="0" x2="0" y2="1"><stop offset="0" stop-color="#fcd878"/><stop offset="1" stop-color="#e8b030"/></linearGradient></defs><rect x="0.75" y="0.75" width="16.5" height="16.5" fill="url(#rg)" stroke="#111" stroke-width="1.5"/></svg>
<svg class="a" style="left:891px;top:110px;overflow:visible" width="24" height="16" viewBox="0 0 24 16"><defs><radialGradient id="eg"><stop offset="0" stop-color="#fff0b0"/><stop offset="1" stop-color="#e8b030"/></radialGradient></defs><ellipse cx="12" cy="8" rx="11" ry="7" fill="url(#eg)" stroke="#111" stroke-width="1.4"/></svg>
<svg class="a" style="left:925px;top:107px;overflow:visible" width="19" height="24" viewBox="0 0 19 24"><defs><radialGradient id="bl" cx=".5" cy=".5" r=".6"><stop offset="0" stop-color="#fff0b0"/><stop offset="1" stop-color="#f0c030"/></radialGradient></defs><path d="M12 1 C14 0 17 1 16.5 3.5 C16 5.5 13.5 6 14.5 8 C16 10 17.5 12 15 14.5 C13 16.5 10.5 15 10 18 C9.5 21 7 23 4.5 22 C2.5 21 4.5 18 3.5 16 C2.5 14 1 12 3 10 C4.5 8.5 2 7 2.5 5.5 C3 3.5 6 4 8 3.5 C10 3 10.5 1.8 12 1 Z" fill="url(#bl)" stroke="#111" stroke-width="1.5"/></svg>
<svg class="a" style="left:963px;top:107px;overflow:visible" width="19" height="24" viewBox="0 0 19 24"><path d="M1.5 1.5 H12 L17.5 7 V22.5 H1.5 Z" fill="#fff" stroke="#8a8a8a"/><path d="M12 1.5 V7 H17.5" fill="#eee" stroke="#8a8a8a"/><path d="M9.5 5 L15 11 H12 V18 H7 V11 H4 Z" fill="#8ac0f0" stroke="#2a6ab0"/></svg>
<svg class="a" style="left:994px;top:107px;overflow:visible" width="19" height="24" viewBox="0 0 19 24"><path d="M1.5 1.5 H12 L17.5 7 V22.5 H1.5 Z" fill="#fff" stroke="#8a8a8a"/><path d="M12 1.5 V7 H17.5" fill="#eee" stroke="#8a8a8a"/><path d="M17 15 L11 20.5 V17.5 H3 V12.5 H11 V9.5 Z" fill="#8ac0f0" stroke="#2a6ab0"/></svg>
<div class="a" style="left:7px;top:137px;width:81px;height:22px;background:#ece9d8;border:1px solid #fff;border-top-color:#aca899;border-left-color:#aca899"></div>
<div class="a" style="left:7px;top:137px;width:81px;height:22px;line-height:22px;text-align:center;font-size:12px">G16</div>
<div class="a" style="left:94px;top:137px;width:948px;height:22px;background:#fff;border:1px solid #7f9db9"></div>
<div class="a" style="left:1044px;top:134px;width:1px;height:28px;background:#aca899"></div>
<div class="a" style="left:4px;top:162px;width:1025px;height:1px;background:#716f64"></div>
<div class="a" style="left:4px;top:163px;width:1025px;height:542px;overflow:hidden;background:#fff">
<div class="a" style="left:107px;top:0;width:1px;height:543px;background:#c0c0c0"></div><div class="a" style="left:171px;top:0;width:1px;height:543px;background:#c0c0c0"></div><div class="a" style="left:235px;top:0;width:1px;height:543px;background:#c0c0c0"></div><div class="a" style="left:299px;top:0;width:1px;height:543px;background:#c0c0c0"></div><div class="a" style="left:363px;top:0;width:1px;height:543px;background:#c0c0c0"></div><div class="a" style="left:427px;top:0;width:1px;height:543px;background:#c0c0c0"></div><div class="a" style="left:491px;top:0;width:1px;height:543px;background:#c0c0c0"></div><div class="a" style="left:555px;top:0;width:1px;height:543px;background:#c0c0c0"></div><div class="a" style="left:619px;top:0;width:1px;height:543px;background:#c0c0c0"></div><div class="a" style="left:683px;top:0;width:1px;height:543px;background:#c0c0c0"></div><div class="a" style="left:747px;top:0;width:1px;height:543px;background:#c0c0c0"></div><div class="a" style="left:811px;top:0;width:1px;height:543px;background:#c0c0c0"></div><div class="a" style="left:875px;top:0;width:1px;height:543px;background:#c0c0c0"></div><div class="a" style="left:939px;top:0;width:1px;height:543px;background:#c0c0c0"></div><div class="a" style="left:1003px;top:0;width:1px;height:543px;background:#c0c0c0"></div><div class="a" style="left:1067px;top:0;width:1px;height:543px;background:#c0c0c0"></div><div class="a" style="left:0;top:33px;width:1025px;height:1px;background:#c0c0c0"></div><div class="a" style="left:0;top:50px;width:1025px;height:1px;background:#c0c0c0"></div><div class="a" style="left:0;top:67px;width:1025px;height:1px;background:#c0c0c0"></div><div class="a" style="left:0;top:84px;width:1025px;height:1px;background:#c0c0c0"></div><div class="a" style="left:0;top:101px;width:1025px;height:1px;background:#c0c0c0"></div><div class="a" style="left:0;top:118px;width:1025px;height:1px;background:#c0c0c0"></div><div class="a" style="left:0;top:135px;width:1025px;height:1px;background:#c0c0c0"></div><div class="a" style="left:0;top:152px;width:1025px;height:1px;background:#c0c0c0"></div><div class="a" style="left:0;top:169px;width:1025px;height:1px;background:#c0c0c0"></div><div class="a" style="left:0;top:186px;width:1025px;height:1px;background:#c0c0c0"></div><div class="a" style="left:0;top:203px;width:1025px;height:1px;background:#c0c0c0"></div><div class="a" style="left:0;top:220px;width:1025px;height:1px;background:#c0c0c0"></div><div class="a" style="left:0;top:237px;width:1025px;height:1px;background:#c0c0c0"></div><div class="a" style="left:0;top:254px;width:1025px;height:1px;background:#c0c0c0"></div><div class="a" style="left:0;top:271px;width:1025px;height:1px;background:#c0c0c0"></div><div class="a" style="left:0;top:288px;width:1025px;height:1px;background:#c0c0c0"></div><div class="a" style="left:0;top:305px;width:1025px;height:1px;background:#c0c0c0"></div><div class="a" style="left:0;top:322px;width:1025px;height:1px;background:#c0c0c0"></div><div class="a" style="left:0;top:339px;width:1025px;height:1px;background:#c0c0c0"></div><div class="a" style="left:0;top:356px;width:1025px;height:1px;background:#c0c0c0"></div><div class="a" style="left:0;top:373px;width:1025px;height:1px;background:#c0c0c0"></div><div class="a" style="left:0;top:390px;width:1025px;height:1px;background:#c0c0c0"></div><div class="a" style="left:0;top:407px;width:1025px;height:1px;background:#c0c0c0"></div><div class="a" style="left:0;top:424px;width:1025px;height:1px;background:#c0c0c0"></div><div class="a" style="left:0;top:441px;width:1025px;height:1px;background:#c0c0c0"></div><div class="a" style="left:0;top:458px;width:1025px;height:1px;background:#c0c0c0"></div><div class="a" style="left:0;top:475px;width:1025px;height:1px;background:#c0c0c0"></div><div class="a" style="left:0;top:492px;width:1025px;height:1px;background:#c0c0c0"></div><div class="a" style="left:0;top:509px;width:1025px;height:1px;background:#c0c0c0"></div><div class="a" style="left:0;top:526px;width:1025px;height:1px;background:#c0c0c0"></div><div class="a" style="left:0;top:543px;width:1025px;height:1px;background:#c0c0c0"></div><div class="a" style="left:0;top:560px;width:1025px;height:1px;background:#c0c0c0"></div>
<div class="a" style="left:0px;top:0px;width:1025px;height:17px;background:#c0c0c0;border-top:1px solid #fff"></div>
<div class="a" style="left:44px;top:0px;width:64px;height:17px;border-left:1px solid #fff;border-top:1px solid #fff;border-right:1px solid #000;border-bottom:1px solid #000"></div>
<div class="a" style="left:44px;top:0px;width:64px;height:16px;line-height:17px;text-align:center;font-weight:bold;font-size:13px;">Year</div>
<div class="a" style="left:108px;top:0px;width:64px;height:17px;border-left:1px solid #fff;border-top:1px solid #fff;border-right:1px solid #000;border-bottom:1px solid #000"></div>
<div class="a" style="left:108px;top:0px;width:64px;height:16px;line-height:17px;text-align:center;font-weight:bold;font-size:13px;">Jan</div>
<div class="a" style="left:172px;top:0px;width:64px;height:17px;border-left:1px solid #fff;border-top:1px solid #fff;border-right:1px solid #000;border-bottom:1px solid #000"></div>
<div class="a" style="left:172px;top:0px;width:64px;height:16px;line-height:17px;text-align:center;font-weight:bold;font-size:13px;">Feb</div>
<div class="a" style="left:236px;top:0px;width:64px;height:17px;border-left:1px solid #fff;border-top:1px solid #fff;border-right:1px solid #000;border-bottom:1px solid #000"></div>
<div class="a" style="left:236px;top:0px;width:64px;height:16px;line-height:17px;text-align:center;font-weight:bold;font-size:13px;">Mar</div>
<div class="a" style="left:300px;top:0px;width:64px;height:17px;border-left:1px solid #fff;border-top:1px solid #fff;border-right:1px solid #000;border-bottom:1px solid #000"></div>
<div class="a" style="left:300px;top:0px;width:64px;height:16px;line-height:17px;text-align:center;font-weight:bold;font-size:13px;">Apr</div>
<div class="a" style="left:364px;top:0px;width:64px;height:17px;border-left:1px solid #fff;border-top:1px solid #fff;border-right:1px solid #000;border-bottom:1px solid #000"></div>
<div class="a" style="left:364px;top:0px;width:64px;height:16px;line-height:17px;text-align:center;font-weight:bold;font-size:13px;">May</div>
<div class="a" style="left:428px;top:0px;width:64px;height:17px;border-left:1px solid #fff;border-top:1px solid #fff;border-right:1px solid #000;border-bottom:1px solid #000"></div>
<div class="a" style="left:428px;top:0px;width:64px;height:16px;line-height:17px;text-align:center;font-weight:bold;font-size:13px;">Jun</div>
<div class="a" style="left:492px;top:0px;width:64px;height:17px;border-left:1px solid #fff;border-top:1px solid #fff;border-right:1px solid #000;border-bottom:1px solid #000"></div>
<div class="a" style="left:492px;top:0px;width:64px;height:16px;line-height:17px;text-align:center;font-weight:bold;font-size:13px;">Jul</div>
<div class="a" style="left:556px;top:0px;width:64px;height:17px;border-left:1px solid #fff;border-top:1px solid #fff;border-right:1px solid #000;border-bottom:1px solid #000"></div>
<div class="a" style="left:556px;top:0px;width:64px;height:16px;line-height:17px;text-align:center;font-weight:bold;font-size:13px;">Aug</div>
<div class="a" style="left:620px;top:0px;width:64px;height:17px;border-left:1px solid #fff;border-top:1px solid #fff;border-right:1px solid #000;border-bottom:1px solid #000"></div>
<div class="a" style="left:620px;top:0px;width:64px;height:16px;line-height:17px;text-align:center;font-weight:bold;font-size:13px;">Sep</div>
<div class="a" style="left:684px;top:0px;width:64px;height:17px;border-left:1px solid #fff;border-top:1px solid #fff;border-right:1px solid #000;border-bottom:1px solid #000"></div>
<div class="a" style="left:684px;top:0px;width:64px;height:16px;line-height:17px;text-align:center;font-weight:bold;font-size:13px;">Oct</div>
<div class="a" style="left:748px;top:0px;width:64px;height:17px;border-left:1px solid #fff;border-top:1px solid #fff;border-right:1px solid #000;border-bottom:1px solid #000"></div>
<div class="a" style="left:748px;top:0px;width:64px;height:16px;line-height:17px;text-align:center;font-weight:bold;font-size:13px;">Nov</div>
<div class="a" style="left:812px;top:0px;width:64px;height:17px;border-left:1px solid #fff;border-top:1px solid #fff;border-right:1px solid #000;border-bottom:1px solid #000"></div>
<div class="a" style="left:812px;top:0px;width:64px;height:16px;line-height:17px;text-align:center;font-weight:bold;font-size:13px;">Dec</div>
<div class="a" style="left:876px;top:0px;width:64px;height:17px;border-left:1px solid #fff;border-top:1px solid #fff;border-right:1px solid #000;border-bottom:1px solid #000"></div>
<div class="a" style="left:876px;top:0px;width:64px;height:16px;line-height:17px;text-align:center;font-weight:bold;font-size:13px;">Annual</div>
<div class="a" style="left:940px;top:0px;width:64px;height:17px;border-left:1px solid #fff;border-top:1px solid #fff;border-right:1px solid #000;border-bottom:1px solid #000"></div>
<div class="a" style="left:940px;top:0px;width:64px;height:16px;line-height:17px;text-align:center;font-weight:bold;font-size:13px;font-family:&#39;Liberation Serif&#39;,serif;font-size:14px;">O</div>
<div class="a" style="left:1004px;top:0px;width:64px;height:17px;border-left:1px solid #fff;border-top:1px solid #fff;border-right:1px solid #000;border-bottom:1px solid #000"></div>
<div class="a" style="left:1004px;top:0px;width:64px;height:16px;line-height:17px;text-align:center;font-weight:bold;font-size:13px;"></div>
<div class="a" style="left:0px;top:0px;width:44px;height:17px;border-top:1px solid #fff;border-left:1px solid #fff;border-right:1px solid #000;border-bottom:1px solid #000"></div>
<div class="a" style="left:0px;top:17px;width:44px;height:17px;background:#c0c0c0;border-top:1px solid #fff;border-left:1px solid #fff;border-right:1px solid #000;border-bottom:1px solid #000"></div>
<div class="a" style="left:0;top:17px;width:44px;height:16px;line-height:17px;text-align:center;font-weight:bold;font-size:13px">1</div>
<div class="a" style="left:0px;top:34px;width:44px;height:17px;background:#c0c0c0;border-top:1px solid #fff;border-left:1px solid #fff;border-right:1px solid #000;border-bottom:1px solid #000"></div>
<div class="a" style="left:0;top:34px;width:44px;height:16px;line-height:17px;text-align:center;font-weight:bold;font-size:13px">2</div>
<div class="a" style="left:0px;top:51px;width:44px;height:17px;background:#c0c0c0;border-top:1px solid #fff;border-left:1px solid #fff;border-right:1px solid #000;border-bottom:1px solid #000"></div>
<div class="a" style="left:0;top:51px;width:44px;height:16px;line-height:17px;text-align:center;font-weight:bold;font-size:13px">3</div>
<div class="a" style="left:0px;top:68px;width:44px;height:17px;background:#c0c0c0;border-top:1px solid #fff;border-left:1px solid #fff;border-right:1px solid #000;border-bottom:1px solid #000"></div>
<div class="a" style="left:0;top:68px;width:44px;height:16px;line-height:17px;text-align:center;font-weight:bold;font-size:13px">4</div>
<div class="a" style="left:0px;top:85px;width:44px;height:17px;background:#c0c0c0;border-top:1px solid #fff;border-left:1px solid #fff;border-right:1px solid #000;border-bottom:1px solid #000"></div>
<div class="a" style="left:0;top:85px;width:44px;height:16px;line-height:17px;text-align:center;font-weight:bold;font-size:13px">5</div>
<div class="a" style="left:0px;top:102px;width:44px;height:17px;background:#c0c0c0;border-top:1px solid #fff;border-left:1px solid #fff;border-right:1px solid #000;border-bottom:1px solid #000"></div>
<div class="a" style="left:0;top:102px;width:44px;height:16px;line-height:17px;text-align:center;font-weight:bold;font-size:13px">6</div>
<div class="a" style="left:0px;top:119px;width:44px;height:17px;background:#c0c0c0;border-top:1px solid #fff;border-left:1px solid #fff;border-right:1px solid #000;border-bottom:1px solid #000"></div>
<div class="a" style="left:0;top:119px;width:44px;height:16px;line-height:17px;text-align:center;font-weight:bold;font-size:13px">7</div>
<div class="a" style="left:0px;top:136px;width:44px;height:17px;background:#c0c0c0;border-top:1px solid #fff;border-left:1px solid #fff;border-right:1px solid #000;border-bottom:1px solid #000"></div>
<div class="a" style="left:0;top:136px;width:44px;height:16px;line-height:17px;text-align:center;font-weight:bold;font-size:13px">8</div>
<div class="a" style="left:0px;top:153px;width:44px;height:17px;background:#c0c0c0;border-top:1px solid #fff;border-left:1px solid #fff;border-right:1px solid #000;border-bottom:1px solid #000"></div>
<div class="a" style="left:0;top:153px;width:44px;height:16px;line-height:17px;text-align:center;font-weight:bold;font-size:13px">9</div>
<div class="a" style="left:0px;top:170px;width:44px;height:17px;background:#c0c0c0;border-top:1px solid #fff;border-left:1px solid #fff;border-right:1px solid #000;border-bottom:1px solid #000"></div>
<div class="a" style="left:0;top:170px;width:44px;height:16px;line-height:17px;text-align:center;font-weight:bold;font-size:13px">10</div>
<div class="a" style="left:0px;top:187px;width:44px;height:17px;background:#c0c0c0;border-top:1px solid #fff;border-left:1px solid #fff;border-right:1px solid #000;border-bottom:1px solid #000"></div>
<div class="a" style="left:0;top:187px;width:44px;height:16px;line-height:17px;text-align:center;font-weight:bold;font-size:13px">11</div>
<div class="a" style="left:0px;top:204px;width:44px;height:17px;background:#c0c0c0;border-top:1px solid #fff;border-left:1px solid #fff;border-right:1px solid #000;border-bottom:1px solid #000"></div>
<div class="a" style="left:0;top:204px;width:44px;height:16px;line-height:17px;text-align:center;font-weight:bold;font-size:13px">12</div>
<div class="a" style="left:0px;top:221px;width:44px;height:17px;background:#c0c0c0;border-top:1px solid #fff;border-left:1px solid #fff;border-right:1px solid #000;border-bottom:1px solid #000"></div>
<div class="a" style="left:0;top:221px;width:44px;height:16px;line-height:17px;text-align:center;font-weight:bold;font-size:13px">13</div>
<div class="a" style="left:0px;top:238px;width:44px;height:17px;background:#c0c0c0;border-top:1px solid #fff;border-left:1px solid #fff;border-right:1px solid #000;border-bottom:1px solid #000"></div>
<div class="a" style="left:0;top:238px;width:44px;height:16px;line-height:17px;text-align:center;font-weight:bold;font-size:13px">14</div>
<div class="a" style="left:0px;top:255px;width:44px;height:17px;background:#c0c0c0;border-top:1px solid #fff;border-left:1px solid #fff;border-right:1px solid #000;border-bottom:1px solid #000"></div>
<div class="a" style="left:0;top:255px;width:44px;height:16px;line-height:17px;text-align:center;font-weight:bold;font-size:13px">15</div>
<div class="a" style="left:0px;top:272px;width:44px;height:17px;background:#c0c0c0;border-top:1px solid #fff;border-left:1px solid #fff;border-right:1px solid #000;border-bottom:1px solid #000"></div>
<div class="a" style="left:0;top:272px;width:44px;height:16px;line-height:17px;text-align:center;font-weight:bold;font-size:13px">16</div>
<div class="a" style="left:0px;top:289px;width:44px;height:17px;background:#c0c0c0;border-top:1px solid #fff;border-left:1px solid #fff;border-right:1px solid #000;border-bottom:1px solid #000"></div>
<div class="a" style="left:0;top:289px;width:44px;height:16px;line-height:17px;text-align:center;font-weight:bold;font-size:13px">17</div>
<div class="a" style="left:0px;top:306px;width:44px;height:17px;background:#c0c0c0;border-top:1px solid #fff;border-left:1px solid #fff;border-right:1px solid #000;border-bottom:1px solid #000"></div>
<div class="a" style="left:0;top:306px;width:44px;height:16px;line-height:17px;text-align:center;font-weight:bold;font-size:13px">18</div>
<div class="a" style="left:0px;top:323px;width:44px;height:17px;background:#c0c0c0;border-top:1px solid #fff;border-left:1px solid #fff;border-right:1px solid #000;border-bottom:1px solid #000"></div>
<div class="a" style="left:0;top:323px;width:44px;height:16px;line-height:17px;text-align:center;font-weight:bold;font-size:13px">19</div>
<div class="a" style="left:0px;top:340px;width:44px;height:17px;background:#c0c0c0;border-top:1px solid #fff;border-left:1px solid #fff;border-right:1px solid #000;border-bottom:1px solid #000"></div>
<div class="a" style="left:0;top:340px;width:44px;height:16px;line-height:17px;text-align:center;font-weight:bold;font-size:13px">20</div>
<div class="a" style="left:0px;top:357px;width:44px;height:17px;background:#c0c0c0;border-top:1px solid #fff;border-left:1px solid #fff;border-right:1px solid #000;border-bottom:1px solid #000"></div>
<div class="a" style="left:0;top:357px;width:44px;height:16px;line-height:17px;text-align:center;font-weight:bold;font-size:13px">21</div>
<div class="a" style="left:0px;top:374px;width:44px;height:17px;background:#c0c0c0;border-top:1px solid #fff;border-left:1px solid #fff;border-right:1px solid #000;border-bottom:1px solid #000"></div>
<div class="a" style="left:0;top:374px;width:44px;height:16px;line-height:17px;text-align:center;font-weight:bold;font-size:13px">22</div>
<div class="a" style="left:0px;top:391px;width:44px;height:17px;background:#c0c0c0;border-top:1px solid #fff;border-left:1px solid #fff;border-right:1px solid #000;border-bottom:1px solid #000"></div>
<div class="a" style="left:0;top:391px;width:44px;height:16px;line-height:17px;text-align:center;font-weight:bold;font-size:13px">23</div>
<div class="a" style="left:0px;top:408px;width:44px;height:17px;background:#c0c0c0;border-top:1px solid #fff;border-left:1px solid #fff;border-right:1px solid #000;border-bottom:1px solid #000"></div>
<div class="a" style="left:0;top:408px;width:44px;height:16px;line-height:17px;text-align:center;font-weight:bold;font-size:13px">24</div>
<div class="a" style="left:0px;top:425px;width:44px;height:17px;background:#c0c0c0;border-top:1px solid #fff;border-left:1px solid #fff;border-right:1px solid #000;border-bottom:1px solid #000"></div>
<div class="a" style="left:0;top:425px;width:44px;height:16px;line-height:17px;text-align:center;font-weight:bold;font-size:13px">25</div>
<div class="a" style="left:0px;top:442px;width:44px;height:17px;background:#c0c0c0;border-top:1px solid #fff;border-left:1px solid #fff;border-right:1px solid #000;border-bottom:1px solid #000"></div>
<div class="a" style="left:0;top:442px;width:44px;height:16px;line-height:17px;text-align:center;font-weight:bold;font-size:13px">26</div>
<div class="a" style="left:0px;top:459px;width:44px;height:17px;background:#c0c0c0;border-top:1px solid #fff;border-left:1px solid #fff;border-right:1px solid #000;border-bottom:1px solid #000"></div>
<div class="a" style="left:0;top:459px;width:44px;height:16px;line-height:17px;text-align:center;font-weight:bold;font-size:13px">27</div>
<div class="a" style="left:0px;top:476px;width:44px;height:17px;background:#c0c0c0;border-top:1px solid #fff;border-left:1px solid #fff;border-right:1px solid #000;border-bottom:1px solid #000"></div>
<div class="a" style="left:0;top:476px;width:44px;height:16px;line-height:17px;text-align:center;font-weight:bold;font-size:13px">28</div>
<div class="a" style="left:0px;top:493px;width:44px;height:17px;background:#c0c0c0;border-top:1px solid #fff;border-left:1px solid #fff;border-right:1px solid #000;border-bottom:1px solid #000"></div>
<div class="a" style="left:0;top:493px;width:44px;height:16px;line-height:17px;text-align:center;font-weight:bold;font-size:13px">29</div>
<div class="a" style="left:0px;top:510px;width:44px;height:17px;background:#c0c0c0;border-top:1px solid #fff;border-left:1px solid #fff;border-right:1px solid #000;border-bottom:1px solid #000"></div>
<div class="a" style="left:0;top:510px;width:44px;height:16px;line-height:17px;text-align:center;font-weight:bold;font-size:13px">30</div>
<div class="a" style="left:0px;top:527px;width:44px;height:17px;background:#c0c0c0;border-top:1px solid #fff;border-left:1px solid #fff;border-right:1px solid #000;border-bottom:1px solid #000"></div>
<div class="a" style="left:0;top:527px;width:44px;height:16px;line-height:17px;text-align:center;font-weight:bold;font-size:13px">31</div>
<div class="a" style="left:0px;top:544px;width:44px;height:17px;background:#c0c0c0;border-top:1px solid #fff;border-left:1px solid #fff;border-right:1px solid #000;border-bottom:1px solid #000"></div>
<div class="a" style="left:0;top:544px;width:44px;height:16px;line-height:17px;text-align:center;font-weight:bold;font-size:13px">32</div>
<div class="a" style="left:44px;top:17px;width:64px;height:17px;background:#d9ecd9;line-height:17px;text-align:center;font-weight:bold;font-size:13px;">1990</div>
<div class="a" style="left:108px;top:17px;width:64px;height:17px;background:#8bc78a;line-height:17px;text-align:right;padding-right:3px;font-size:13px;">127.4</div>
<div class="a" style="left:172px;top:17px;width:64px;height:17px;background:#8bc78a;line-height:17px;text-align:right;padding-right:3px;font-size:13px;">128.0</div>
<div class="a" style="left:236px;top:17px;width:64px;height:17px;background:#8bc78a;line-height:17px;text-align:right;padding-right:3px;font-size:13px;">128.7</div>
<div class="a" style="left:300px;top:17px;width:64px;height:17px;background:#91ca90;line-height:17px;text-align:right;padding-right:3px;font-size:13px;">128.9</div>
<div class="a" style="left:364px;top:17px;width:64px;height:17px;background:#91ca90;line-height:17px;text-align:right;padding-right:3px;font-size:13px;">129.2</div>
<div class="a" style="left:428px;top:17px;width:64px;height:17px;background:#91ca90;line-height:17px;text-align:right;padding-right:3px;font-size:13px;">129.9</div>
<div class="a" style="left:492px;top:17px;width:64px;height:17px;background:#97cd96;line-height:17px;text-align:right;padding-right:3px;font-size:13px;">130.4</div>
<div class="a" style="left:556px;top:17px;width:64px;height:17px;background:#9ccf9c;line-height:17px;text-align:right;padding-right:3px;font-size:13px;">131.6</div>
<div class="a" style="left:620px;top:17px;width:64px;height:17px;background:#9ccf9c;line-height:17px;text-align:right;padding-right:3px;font-size:13px;">132.7</div>
<div class="a" style="left:684px;top:17px;width:64px;height:17px;background:#a2d2a1;line-height:17px;text-align:right;padding-right:3px;font-size:13px;">133.5</div>
<div class="a" style="left:748px;top:17px;width:64px;height:17px;background:#a2d2a1;line-height:17px;text-align:right;padding-right:3px;font-size:13px;">133.8</div>
<div class="a" style="left:812px;top:17px;width:64px;height:17px;background:#a2d2a1;line-height:17px;text-align:right;padding-right:3px;font-size:13px;">133.8</div>
<div class="a" style="left:876px;top:17px;width:64px;height:17px;background:#c8e6c8;line-height:17px;text-align:right;padding-right:3px;font-size:13px;">130.7</div>
<div class="a" style="left:44px;top:34px;width:64px;height:17px;background:#d9ecd9;line-height:17px;text-align:center;font-weight:bold;font-size:13px;">1991</div>
<div class="a" style="left:108px;top:34px;width:64px;height:17px;background:#a8d5a7;line-height:17px;text-align:right;padding-right:3px;font-size:13px;">134.6</div>
<div class="a" style="left:172px;top:34px;width:64px;height:17px;background:#a8d5a7;line-height:17px;text-align:right;padding-right:3px;font-size:13px;">134.8</div>
<div class="a" style="left:236px;top:34px;width:64px;height:17px;background:#a8d5a7;line-height:17px;text-align:right;padding-right:3px;font-size:13px;">135.0</div>
<div class="a" style="left:300px;top:34px;width:64px;height:17px;background:#a8d5a7;line-height:17px;text-align:right;padding-right:3px;font-size:13px;">135.2</div>
<div class="a" style="left:364px;top:34px;width:64px;height:17px;background:#aed8ad;line-height:17px;text-align:right;padding-right:3px;font-size:13px;">135.6</div>
<div class="a" style="left:428px;top:34px;width:64px;height:17px;background:#aed8ad;line-height:17px;text-align:right;padding-right:3px;font-size:13px;">136.0</div>
<div class="a" style="left:492px;top:34px;width:64px;height:17px;background:#aed8ad;line-height:17px;text-align:right;padding-right:3px;font-size:13px;">136.2</div>
<div class="a" style="left:556px;top:34px;width:64px;height:17px;background:#aed8ad;line-height:17px;text-align:right;padding-right:3px;font-size:13px;">136.6</div>
<div class="a" style="left:620px;top:34px;width:64px;height:17px;background:#b4dbb3;line-height:17px;text-align:right;padding-right:3px;font-size:13px;">137.2</div>
<div class="a" style="left:684px;top:34px;width:64px;height:17px;background:#b4dbb3;line-height:17px;text-align:right;padding-right:3px;font-size:13px;">137.4</div>
<div class="a" style="left:748px;top:34px;width:64px;height:17px;background:#b4dbb3;line-height:17px;text-align:right;padding-right:3px;font-size:13px;">137.8</div>
<div class="a" style="left:812px;top:34px;width:64px;height:17px;background:#b4dbb3;line-height:17px;text-align:right;padding-right:3px;font-size:13px;">137.9</div>
<div class="a" style="left:876px;top:34px;width:64px;height:17px;background:#fff;line-height:17px;text-align:right;padding-right:3px;font-size:13px;">136.2</div>
<div class="a" style="left:44px;top:51px;width:64px;height:17px;background:#d9ecd9;line-height:17px;text-align:center;font-weight:bold;font-size:13px;">1992</div>
<div class="a" style="left:108px;top:51px;width:64px;height:17px;background:#b4dbb3;line-height:17px;text-align:right;padding-right:3px;font-size:13px;">138.1</div>
<div class="a" style="left:172px;top:51px;width:64px;height:17px;background:#b9ddb9;line-height:17px;text-align:right;padding-right:3px;font-size:13px;">138.6</div>
<div class="a" style="left:236px;top:51px;width:64px;height:17px;background:#b9ddb9;line-height:17px;text-align:right;padding-right:3px;font-size:13px;">139.3</div>
<div class="a" style="left:300px;top:51px;width:64px;height:17px;background:#b9ddb9;line-height:17px;text-align:right;padding-right:3px;font-size:13px;">139.5</div>
<div class="a" style="left:364px;top:51px;width:64px;height:17px;background:#bfe0bf;line-height:17px;text-align:right;padding-right:3px;font-size:13px;">139.7</div>
<div class="a" style="left:428px;top:51px;width:64px;height:17px;background:#bfe0bf;line-height:17px;text-align:right;padding-right:3px;font-size:13px;">140.2</div>
<div class="a" style="left:492px;top:51px;width:64px;height:17px;background:#bfe0bf;line-height:17px;text-align:right;padding-right:3px;font-size:13px;">140.5</div>
<div class="a" style="left:556px;top:51px;width:64px;height:17px;background:#c5e3c4;line-height:17px;text-align:right;padding-right:3px;font-size:13px;">140.9</div>
<div class="a" style="left:620px;top:51px;width:64px;height:17px;background:#c5e3c4;line-height:17px;text-align:right;padding-right:3px;font-size:13px;">141.3</div>
<div class="a" style="left:684px;top:51px;width:64px;height:17px;background:#c5e3c4;line-height:17px;text-align:right;padding-right:3px;font-size:13px;">141.8</div>
<div class="a" style="left:748px;top:51px;width:64px;height:17px;background:#c5e3c4;line-height:17px;text-align:right;padding-right:3px;font-size:13px;">142.0</div>
<div class="a" style="left:812px;top:51px;width:64px;height:17px;background:#c5e3c4;line-height:17px;text-align:right;padding-right:3px;font-size:13px;">141.9</div>
<div class="a" style="left:876px;top:51px;width:64px;height:17px;background:#c8e6c8;line-height:17px;text-align:right;padding-right:3px;font-size:13px;">140.3</div>
<div class="a" style="left:44px;top:68px;width:64px;height:17px;background:#d9ecd9;line-height:17px;text-align:center;font-weight:bold;font-size:13px;">1993</div>
<div class="a" style="left:108px;top:68px;width:64px;height:17px;background:#cbe6ca;line-height:17px;text-align:right;padding-right:3px;font-size:13px;">142.6</div>
<div class="a" style="left:172px;top:68px;width:64px;height:17px;background:#cbe6ca;line-height:17px;text-align:right;padding-right:3px;font-size:13px;">143.1</div>
<div class="a" style="left:236px;top:68px;width:64px;height:17px;background:#d1e9d0;line-height:17px;text-align:right;padding-right:3px;font-size:13px;">143.6</div>
<div class="a" style="left:300px;top:68px;width:64px;height:17px;background:#d1e9d0;line-height:17px;text-align:right;padding-right:3px;font-size:13px;">144.0</div>
<div class="a" style="left:364px;top:68px;width:64px;height:17px;background:#d1e9d0;line-height:17px;text-align:right;padding-right:3px;font-size:13px;">144.2</div>
<div class="a" style="left:428px;top:68px;width:64px;height:17px;background:#d1e9d0;line-height:17px;text-align:right;padding-right:3px;font-size:13px;">144.4</div>
<div class="a" style="left:492px;top:68px;width:64px;height:17px;background:#d1e9d0;line-height:17px;text-align:right;padding-right:3px;font-size:13px;">144.4</div>
<div class="a" style="left:556px;top:68px;width:64px;height:17px;background:#d1e9d0;line-height:17px;text-align:right;padding-right:3px;font-size:13px;">144.8</div>
<div class="a" style="left:620px;top:68px;width:64px;height:17px;background:#d6ebd6;line-height:17px;text-align:right;padding-right:3px;font-size:13px;">145.1</div>
<div class="a" style="left:684px;top:68px;width:64px;height:17px;background:#d6ebd6;line-height:17px;text-align:right;padding-right:3px;font-size:13px;">145.7</div>
<div class="a" style="left:748px;top:68px;width:64px;height:17px;background:#d6ebd6;line-height:17px;text-align:right;padding-right:3px;font-size:13px;">145.8</div>
<div class="a" style="left:812px;top:68px;width:64px;height:17px;background:#d6ebd6;line-height:17px;text-align:right;padding-right:3px;font-size:13px;">145.8</div>
<div class="a" style="left:876px;top:68px;width:64px;height:17px;background:#fff;line-height:17px;text-align:right;padding-right:3px;font-size:13px;">144.5</div>
<div class="a" style="left:44px;top:85px;width:64px;height:17px;background:#d9ecd9;line-height:17px;text-align:center;font-weight:bold;font-size:13px;">1994</div>
<div class="a" style="left:108px;top:85px;width:64px;height:17px;background:#d6ebd6;line-height:17px;text-align:right;padding-right:3px;font-size:13px;">146.2</div>
<div class="a" style="left:172px;top:85px;width:64px;height:17px;background:#dceedc;line-height:17px;text-align:right;padding-right:3px;font-size:13px;">146.7</div>
<div class="a" style="left:236px;top:85px;width:64px;height:17px;background:#dceedc;line-height:17px;text-align:right;padding-right:3px;font-size:13px;">147.2</div>
<div class="a" style="left:300px;top:85px;width:64px;height:17px;background:#dceedc;line-height:17px;text-align:right;padding-right:3px;font-size:13px;">147.4</div>
<div class="a" style="left:364px;top:85px;width:64px;height:17px;background:#dceedc;line-height:17px;text-align:right;padding-right:3px;font-size:13px;">147.5</div>
<div class="a" style="left:428px;top:85px;width:64px;height:17px;background:#e2f1e2;line-height:17px;text-align:right;padding-right:3px;font-size:13px;">148.0</div>
<div class="a" style="left:492px;top:85px;width:64px;height:17px;background:#e2f1e2;line-height:17px;text-align:right;padding-right:3px;font-size:13px;">148.4</div>
<div class="a" style="left:556px;top:85px;width:64px;height:17px;background:#e8f4e8;line-height:17px;text-align:right;padding-right:3px;font-size:13px;">149.0</div>
<div class="a" style="left:620px;top:85px;width:64px;height:17px;background:#e8f4e8;line-height:17px;text-align:right;padding-right:3px;font-size:13px;">149.4</div>
<div class="a" style="left:684px;top:85px;width:64px;height:17px;background:#e8f4e8;line-height:17px;text-align:right;padding-right:3px;font-size:13px;">149.5</div>
<div class="a" style="left:748px;top:85px;width:64px;height:17px;background:#e8f4e8;line-height:17px;text-align:right;padding-right:3px;font-size:13px;">149.7</div>
<div class="a" style="left:812px;top:85px;width:64px;height:17px;background:#e8f4e8;line-height:17px;text-align:right;padding-right:3px;font-size:13px;">149.7</div>
<div class="a" style="left:876px;top:85px;width:64px;height:17px;background:#c8e6c8;line-height:17px;text-align:right;padding-right:3px;font-size:13px;">148.2</div>
<div class="a" style="left:44px;top:102px;width:64px;height:17px;background:#d9ecd9;line-height:17px;text-align:center;font-weight:bold;font-size:13px;">1995</div>
<div class="a" style="left:108px;top:102px;width:64px;height:17px;background:#e8f4e8;line-height:17px;text-align:right;padding-right:3px;font-size:13px;">150.3</div>
<div class="a" style="left:172px;top:102px;width:64px;height:17px;background:#eef7ed;line-height:17px;text-align:right;padding-right:3px;font-size:13px;">150.9</div>
<div class="a" style="left:236px;top:102px;width:64px;height:17px;background:#eef7ed;line-height:17px;text-align:right;padding-right:3px;font-size:13px;">151.4</div>
<div class="a" style="left:300px;top:102px;width:64px;height:17px;background:#f3f9f3;line-height:17px;text-align:right;padding-right:3px;font-size:13px;">151.9</div>
<div class="a" style="left:364px;top:102px;width:64px;height:17px;background:#f3f9f3;line-height:17px;text-align:right;padding-right:3px;font-size:13px;">152.2</div>
<div class="a" style="left:428px;top:102px;width:64px;height:17px;background:#f3f9f3;line-height:17px;text-align:right;padding-right:3px;font-size:13px;">152.5</div>
<div class="a" style="left:492px;top:102px;width:64px;height:17px;background:#f3f9f3;line-height:17px;text-align:right;padding-right:3px;font-size:13px;">152.5</div>
<div class="a" style="left:556px;top:102px;width:64px;height:17px;background:#f3f9f3;line-height:17px;text-align:right;padding-right:3px;font-size:13px;">152.9</div>
<div class="a" style="left:620px;top:102px;width:64px;height:17px;background:#f9fcf9;line-height:17px;text-align:right;padding-right:3px;font-size:13px;">153.2</div>
<div class="a" style="left:684px;top:102px;width:64px;height:17px;background:#f9fcf9;line-height:17px;text-align:right;padding-right:3px;font-size:13px;">153.7</div>
<div class="a" style="left:748px;top:102px;width:64px;height:17px;background:#f9fcf9;line-height:17px;text-align:right;padding-right:3px;font-size:13px;">153.6</div>
<div class="a" style="left:812px;top:102px;width:64px;height:17px;background:#f9fcf9;line-height:17px;text-align:right;padding-right:3px;font-size:13px;">153.5</div>
<div class="a" style="left:876px;top:102px;width:64px;height:17px;background:#fff;line-height:17px;text-align:right;padding-right:3px;font-size:13px;">152.4</div>
<div class="a" style="left:44px;top:119px;width:64px;height:17px;background:#d9ecd9;line-height:17px;text-align:center;font-weight:bold;font-size:13px;">1996</div>
<div class="a" style="left:108px;top:119px;width:64px;height:17px;background:#fcf9f9;line-height:17px;text-align:right;padding-right:3px;font-size:13px;">154.4</div>
<div class="a" style="left:172px;top:119px;width:64px;height:17px;background:#fcf9f9;line-height:17px;text-align:right;padding-right:3px;font-size:13px;">154.9</div>
<div class="a" style="left:236px;top:119px;width:64px;height:17px;background:#f9f3f3;line-height:17px;text-align:right;padding-right:3px;font-size:13px;">155.7</div>
<div class="a" style="left:300px;top:119px;width:64px;height:17px;background:#f9f3f3;line-height:17px;text-align:right;padding-right:3px;font-size:13px;">156.3</div>
<div class="a" style="left:364px;top:119px;width:64px;height:17px;background:#f9f3f3;line-height:17px;text-align:right;padding-right:3px;font-size:13px;">156.6</div>
<div class="a" style="left:428px;top:119px;width:64px;height:17px;background:#f9f3f3;line-height:17px;text-align:right;padding-right:3px;font-size:13px;">156.7</div>
<div class="a" style="left:492px;top:119px;width:64px;height:17px;background:#f9f3f3;line-height:17px;text-align:right;padding-right:3px;font-size:13px;">157.0</div>
<div class="a" style="left:556px;top:119px;width:64px;height:17px;background:#f6eded;line-height:17px;text-align:right;padding-right:3px;font-size:13px;">157.3</div>
<div class="a" style="left:620px;top:119px;width:64px;height:17px;background:#f6eded;line-height:17px;text-align:right;padding-right:3px;font-size:13px;">157.8</div>
<div class="a" style="left:684px;top:119px;width:64px;height:17px;background:#f6eded;line-height:17px;text-align:right;padding-right:3px;font-size:13px;">158.3</div>
<div class="a" style="left:748px;top:119px;width:64px;height:17px;background:#f3e7e6;line-height:17px;text-align:right;padding-right:3px;font-size:13px;">158.6</div>
<div class="a" style="left:812px;top:119px;width:64px;height:17px;background:#f3e7e6;line-height:17px;text-align:right;padding-right:3px;font-size:13px;">158.6</div>
<div class="a" style="left:876px;top:119px;width:64px;height:17px;background:#c8e6c8;line-height:17px;text-align:right;padding-right:3px;font-size:13px;">156.9</div>
<div class="a" style="left:44px;top:136px;width:64px;height:17px;background:#d9ecd9;line-height:17px;text-align:center;font-weight:bold;font-size:13px;">1997</div>
<div class="a" style="left:108px;top:136px;width:64px;height:17px;background:#f3e7e6;line-height:17px;text-align:right;padding-right:3px;font-size:13px;">159.1</div>
<div class="a" style="left:172px;top:136px;width:64px;height:17px;background:#f3e7e6;line-height:17px;text-align:right;padding-right:3px;font-size:13px;">159.6</div>
<div class="a" style="left:236px;top:136px;width:64px;height:17px;background:#f0e0e0;line-height:17px;text-align:right;padding-right:3px;font-size:13px;">160.0</div>
<div class="a" style="left:300px;top:136px;width:64px;height:17px;background:#f0e0e0;line-height:17px;text-align:right;padding-right:3px;font-size:13px;">160.2</div>
<div class="a" style="left:364px;top:136px;width:64px;height:17px;background:#f0e0e0;line-height:17px;text-align:right;padding-right:3px;font-size:13px;">160.1</div>
<div class="a" style="left:428px;top:136px;width:64px;height:17px;background:#f0e0e0;line-height:17px;text-align:right;padding-right:3px;font-size:13px;">160.3</div>
<div class="a" style="left:492px;top:136px;width:64px;height:17px;background:#f0e0e0;line-height:17px;text-align:right;padding-right:3px;font-size:13px;">160.5</div>
<div class="a" style="left:556px;top:136px;width:64px;height:17px;background:#f0e0e0;line-height:17px;text-align:right;padding-right:3px;font-size:13px;">160.8</div>
<div class="a" style="left:620px;top:136px;width:64px;height:17px;background:#eedada;line-height:17px;text-align:right;padding-right:3px;font-size:13px;">161.2</div>
<div class="a" style="left:684px;top:136px;width:64px;height:17px;background:#eedada;line-height:17px;text-align:right;padding-right:3px;font-size:13px;">161.6</div>
<div class="a" style="left:748px;top:136px;width:64px;height:17px;background:#eedada;line-height:17px;text-align:right;padding-right:3px;font-size:13px;">161.5</div>
<div class="a" style="left:812px;top:136px;width:64px;height:17px;background:#eedada;line-height:17px;text-align:right;padding-right:3px;font-size:13px;">161.3</div>
<div class="a" style="left:876px;top:136px;width:64px;height:17px;background:#fff;line-height:17px;text-align:right;padding-right:3px;font-size:13px;">160.5</div>
<div class="a" style="left:44px;top:153px;width:64px;height:17px;background:#d9ecd9;line-height:17px;text-align:center;font-weight:bold;font-size:13px;">1998</div>
<div class="a" style="left:108px;top:153px;width:64px;height:17px;background:#eedada;line-height:17px;text-align:right;padding-right:3px;font-size:13px;">161.6</div>
<div class="a" style="left:172px;top:153px;width:64px;height:17px;background:#eedada;line-height:17px;text-align:right;padding-right:3px;font-size:13px;">161.9</div>
<div class="a" style="left:236px;top:153px;width:64px;height:17px;background:#eedada;line-height:17px;text-align:right;padding-right:3px;font-size:13px;">162.2</div>
<div class="a" style="left:300px;top:153px;width:64px;height:17px;background:#ebd4d4;line-height:17px;text-align:right;padding-right:3px;font-size:13px;">162.5</div>
<div class="a" style="left:364px;top:153px;width:64px;height:17px;background:#ebd4d4;line-height:17px;text-align:right;padding-right:3px;font-size:13px;">162.8</div>
<div class="a" style="left:428px;top:153px;width:64px;height:17px;background:#ebd4d4;line-height:17px;text-align:right;padding-right:3px;font-size:13px;">163.0</div>
<div class="a" style="left:492px;top:153px;width:64px;height:17px;background:#ebd4d4;line-height:17px;text-align:right;padding-right:3px;font-size:13px;">163.2</div>
<div class="a" style="left:556px;top:153px;width:64px;height:17px;background:#ebd4d4;line-height:17px;text-align:right;padding-right:3px;font-size:13px;">163.4</div>
<div class="a" style="left:620px;top:153px;width:64px;height:17px;background:#ebd4d4;line-height:17px;text-align:right;padding-right:3px;font-size:13px;">163.6</div>
<div class="a" style="left:684px;top:153px;width:64px;height:17px;background:#e8cece;line-height:17px;text-align:right;padding-right:3px;font-size:13px;">164.0</div>
<div class="a" style="left:748px;top:153px;width:64px;height:17px;background:#e8cece;line-height:17px;text-align:right;padding-right:3px;font-size:13px;">164.0</div>
<div class="a" style="left:812px;top:153px;width:64px;height:17px;background:#e8cece;line-height:17px;text-align:right;padding-right:3px;font-size:13px;">163.9</div>
<div class="a" style="left:876px;top:153px;width:64px;height:17px;background:#c8e6c8;line-height:17px;text-align:right;padding-right:3px;font-size:13px;">163.0</div>
<div class="a" style="left:44px;top:170px;width:64px;height:17px;background:#d9ecd9;line-height:17px;text-align:center;font-weight:bold;font-size:13px;">1999</div>
<div class="a" style="left:108px;top:170px;width:64px;height:17px;background:#e8cece;line-height:17px;text-align:right;padding-right:3px;font-size:13px;">164.3</div>
<div class="a" style="left:172px;top:170px;width:64px;height:17px;background:#e8cece;line-height:17px;text-align:right;padding-right:3px;font-size:13px;">164.5</div>
<div class="a" style="left:236px;top:170px;width:64px;height:17px;background:#e8cece;line-height:17px;text-align:right;padding-right:3px;font-size:13px;">165.0</div>
<div class="a" style="left:300px;top:170px;width:64px;height:17px;background:#e5c8c8;line-height:17px;text-align:right;padding-right:3px;font-size:13px;">166.2</div>
<div class="a" style="left:364px;top:170px;width:64px;height:17px;background:#e5c8c8;line-height:17px;text-align:right;padding-right:3px;font-size:13px;">166.2</div>
<div class="a" style="left:428px;top:170px;width:64px;height:17px;background:#e5c8c8;line-height:17px;text-align:right;padding-right:3px;font-size:13px;">166.2</div>
<div class="a" style="left:492px;top:170px;width:64px;height:17px;background:#e2c2c2;line-height:17px;text-align:right;padding-right:3px;font-size:13px;">166.7</div>
<div class="a" style="left:556px;top:170px;width:64px;height:17px;background:#e2c2c2;line-height:17px;text-align:right;padding-right:3px;font-size:13px;">167.1</div>
<div class="a" style="left:620px;top:170px;width:64px;height:17px;background:#dfbcbb;line-height:17px;text-align:right;padding-right:3px;font-size:13px;">167.9</div>
<div class="a" style="left:684px;top:170px;width:64px;height:17px;background:#dfbcbb;line-height:17px;text-align:right;padding-right:3px;font-size:13px;">168.2</div>
<div class="a" style="left:748px;top:170px;width:64px;height:17px;background:#dfbcbb;line-height:17px;text-align:right;padding-right:3px;font-size:13px;">168.3</div>
<div class="a" style="left:812px;top:170px;width:64px;height:17px;background:#dfbcbb;line-height:17px;text-align:right;padding-right:3px;font-size:13px;">168.3</div>
<div class="a" style="left:876px;top:170px;width:64px;height:17px;background:#fff;line-height:17px;text-align:right;padding-right:3px;font-size:13px;">166.6</div>
<div class="a" style="left:44px;top:187px;width:64px;height:17px;background:#d9ecd9;line-height:17px;text-align:center;font-weight:bold;font-size:13px;">2000</div>
<div class="a" style="left:108px;top:187px;width:64px;height:17px;background:#dfbcbb;line-height:17px;text-align:right;padding-right:3px;font-size:13px;">168.8</div>
<div class="a" style="left:172px;top:187px;width:64px;height:17px;background:#dcb6b5;line-height:17px;text-align:right;padding-right:3px;font-size:13px;">169.8</div>
<div class="a" style="left:236px;top:187px;width:64px;height:17px;background:#d9b0af;line-height:17px;text-align:right;padding-right:3px;font-size:13px;">171.2</div>
<div class="a" style="left:300px;top:187px;width:64px;height:17px;background:#d9b0af;line-height:17px;text-align:right;padding-right:3px;font-size:13px;">171.3</div>
<div class="a" style="left:364px;top:187px;width:64px;height:17px;background:#d9b0af;line-height:17px;text-align:right;padding-right:3px;font-size:13px;">171.5</div>
<div class="a" style="left:428px;top:187px;width:64px;height:17px;background:#d6aaa9;line-height:17px;text-align:right;padding-right:3px;font-size:13px;">172.4</div>
<div class="a" style="left:492px;top:187px;width:64px;height:17px;background:#d6aaa9;line-height:17px;text-align:right;padding-right:3px;font-size:13px;">172.8</div>
<div class="a" style="left:556px;top:187px;width:64px;height:17px;background:#d6aaa9;line-height:17px;text-align:right;padding-right:3px;font-size:13px;">172.8</div>
<div class="a" style="left:620px;top:187px;width:64px;height:17px;background:#d4a4a3;line-height:17px;text-align:right;padding-right:3px;font-size:13px;">173.7</div>
<div class="a" style="left:684px;top:187px;width:64px;height:17px;background:#d4a4a3;line-height:17px;text-align:right;padding-right:3px;font-size:13px;">174.0</div>
<div class="a" style="left:748px;top:187px;width:64px;height:17px;background:#d4a4a3;line-height:17px;text-align:right;padding-right:3px;font-size:13px;">174.1</div>
<div class="a" style="left:812px;top:187px;width:64px;height:17px;background:#d4a4a3;line-height:17px;text-align:right;padding-right:3px;font-size:13px;">174.0</div>
<div class="a" style="left:876px;top:187px;width:64px;height:17px;background:#c8e6c8;line-height:17px;text-align:right;padding-right:3px;font-size:13px;">172.2</div>
<div class="a" style="left:44px;top:204px;width:64px;height:17px;background:#d9ecd9;line-height:17px;text-align:center;font-weight:bold;font-size:13px;">2001</div>
<div class="a" style="left:108px;top:204px;width:64px;height:17px;background:#d19d9d;line-height:17px;text-align:right;padding-right:3px;font-size:13px;">175.1</div>
<div class="a" style="left:172px;top:204px;width:64px;height:17px;background:#d19d9d;line-height:17px;text-align:right;padding-right:3px;font-size:13px;">175.8</div>
<div class="a" style="left:236px;top:204px;width:64px;height:17px;background:#ce9796;line-height:17px;text-align:right;padding-right:3px;font-size:13px;">176.2</div>
<div class="a" style="left:300px;top:204px;width:64px;height:17px;background:#ce9796;line-height:17px;text-align:right;padding-right:3px;font-size:13px;">176.9</div>
<div class="a" style="left:364px;top:204px;width:64px;height:17px;background:#cb9190;line-height:17px;text-align:right;padding-right:3px;font-size:13px;">177.7</div>
<div class="a" style="left:428px;top:204px;width:64px;height:17px;background:#cb9190;line-height:17px;text-align:right;padding-right:3px;font-size:13px;">178.0</div>
<div class="a" style="left:492px;top:204px;width:64px;height:17px;background:#cb9190;line-height:17px;text-align:right;padding-right:3px;font-size:13px;">177.5</div>
<div class="a" style="left:556px;top:204px;width:64px;height:17px;background:#cb9190;line-height:17px;text-align:right;padding-right:3px;font-size:13px;">177.5</div>
<div class="a" style="left:620px;top:204px;width:64px;height:17px;background:#cb9190;line-height:17px;text-align:right;padding-right:3px;font-size:13px;">178.3</div>
<div class="a" style="left:684px;top:204px;width:64px;height:17px;background:#cb9190;line-height:17px;text-align:right;padding-right:3px;font-size:13px;">177.7</div>
<div class="a" style="left:748px;top:204px;width:64px;height:17px;background:#cb9190;line-height:17px;text-align:right;padding-right:3px;font-size:13px;">177.4</div>
<div class="a" style="left:812px;top:204px;width:64px;height:17px;background:#ce9796;line-height:17px;text-align:right;padding-right:3px;font-size:13px;">176.7</div>
<div class="a" style="left:876px;top:204px;width:64px;height:17px;background:#fff;line-height:17px;text-align:right;padding-right:3px;font-size:13px;">177.1</div>
<div class="a" style="left:44px;top:221px;width:64px;height:17px;background:#d9ecd9;line-height:17px;text-align:center;font-weight:bold;font-size:13px;">2002</div>
<div class="a" style="left:108px;top:221px;width:64px;height:17px;background:#ce9796;line-height:17px;text-align:right;padding-right:3px;font-size:13px;">177.1</div>
<div class="a" style="left:172px;top:221px;width:64px;height:17px;background:#cb9190;line-height:17px;text-align:right;padding-right:3px;font-size:13px;">177.8</div>
<div class="a" style="left:236px;top:221px;width:64px;height:17px;background:#c88b8a;line-height:17px;text-align:right;padding-right:3px;font-size:13px;">178.8</div>
<div class="a" style="left:300px;top:221px;width:64px;height:17px;background:#c88b8a;line-height:17px;text-align:right;padding-right:3px;font-size:13px;">179.8</div>
<div class="a" style="left:364px;top:221px;width:64px;height:17px;background:#c88b8a;line-height:17px;text-align:right;padding-right:3px;font-size:13px;">179.8</div>
<div class="a" style="left:428px;top:221px;width:64px;height:17px;background:#c88b8a;line-height:17px;text-align:right;padding-right:3px;font-size:13px;">179.9</div>
<div class="a" style="left:492px;top:221px;width:64px;height:17px;background:#c58584;line-height:17px;text-align:right;padding-right:3px;font-size:13px;">180.1</div>
<div class="a" style="left:556px;top:221px;width:64px;height:17px;background:#c58584;line-height:17px;text-align:right;padding-right:3px;font-size:13px;">180.7</div>
<div class="a" style="left:620px;top:221px;width:64px;height:17px;background:#c58584;line-height:17px;text-align:right;padding-right:3px;font-size:13px;">181.0</div>
<div class="a" style="left:684px;top:221px;width:64px;height:17px;background:#c58584;line-height:17px;text-align:right;padding-right:3px;font-size:13px;">181.3</div>
<div class="a" style="left:748px;top:221px;width:64px;height:17px;background:#c58584;line-height:17px;text-align:right;padding-right:3px;font-size:13px;">181.3</div>
<div class="a" style="left:812px;top:221px;width:64px;height:17px;background:#c58584;line-height:17px;text-align:right;padding-right:3px;font-size:13px;">180.9</div>
<div class="a" style="left:876px;top:221px;width:64px;height:17px;background:#c8e6c8;line-height:17px;text-align:right;padding-right:3px;font-size:13px;">179.9</div>
<div class="a" style="left:107px;top:-1px;width:1px;height:239px;background:#000"></div>
<div class="a" style="left:875px;top:-1px;width:1px;height:239px;background:#000"></div>
<div class="a" style="left:939px;top:-1px;width:1px;height:239px;background:#000"></div>
<div class="a" style="left:44px;top:237px;width:896px;height:1px;background:#000"></div>
<div class="a" style="left:44px;top:391px;width:64px;height:17px;background:#d9ecd9;line-height:17px;text-align:center;font-weight:bold;font-size:13px;">Year</div>
<div class="a" style="left:108px;top:391px;width:64px;height:17px;background:#e3f1e3;line-height:17px;text-align:center;font-weight:bold;font-size:13px;">Jan</div>
<div class="a" style="left:172px;top:391px;width:64px;height:17px;background:#e3f1e3;line-height:17px;text-align:center;font-weight:bold;font-size:13px;">Feb</div>
<div class="a" style="left:236px;top:391px;width:64px;height:17px;background:#e3f1e3;line-height:17px;text-align:center;font-weight:bold;font-size:13px;">Mar</div>
<div class="a" style="left:300px;top:391px;width:64px;height:17px;background:#e3f1e3;line-height:17px;text-align:center;font-weight:bold;font-size:13px;">Apr</div>
<div class="a" style="left:364px;top:391px;width:64px;height:17px;background:#e3f1e3;line-height:17px;text-align:center;font-weight:bold;font-size:13px;">May</div>
<div class="a" style="left:428px;top:391px;width:64px;height:17px;background:#e3f1e3;line-height:17px;text-align:center;font-weight:bold;font-size:13px;">Jun</div>
<div class="a" style="left:492px;top:391px;width:64px;height:17px;background:#e3f1e3;line-height:17px;text-align:center;font-weight:bold;font-size:13px;">Jul</div>
<div class="a" style="left:556px;top:391px;width:64px;height:17px;background:#e3f1e3;line-height:17px;text-align:center;font-weight:bold;font-size:13px;">Aug</div>
<div class="a" style="left:620px;top:391px;width:64px;height:17px;background:#e3f1e3;line-height:17px;text-align:center;font-weight:bold;font-size:13px;">Sep</div>
<div class="a" style="left:684px;top:391px;width:64px;height:17px;background:#e3f1e3;line-height:17px;text-align:center;font-weight:bold;font-size:13px;">Oct</div>
<div class="a" style="left:748px;top:391px;width:64px;height:17px;background:#e3f1e3;line-height:17px;text-align:center;font-weight:bold;font-size:13px;">Nov</div>
<div class="a" style="left:812px;top:391px;width:64px;height:17px;background:#e3f1e3;line-height:17px;text-align:center;font-weight:bold;font-size:13px;">Dec</div>
<div class="a" style="left:876px;top:391px;width:64px;height:17px;background:#c8e6c8;line-height:17px;text-align:center;font-weight:bold;font-size:13px;">Annual</div>
<div class="a" style="left:44px;top:408px;width:64px;height:17px;background:#d9ecd9;line-height:17px;text-align:center;font-weight:bold;font-size:13px;">1990</div>
<div class="a" style="left:108px;top:408px;width:64px;height:17px;background:#c8e6c8;line-height:17px;text-align:right;padding-right:3px;font-size:13px;">127.4</div>
<div class="a" style="left:172px;top:408px;width:64px;height:17px;background:#c8e6c8;line-height:17px;text-align:right;padding-right:3px;font-size:13px;">128.0</div>
<div class="a" style="left:236px;top:408px;width:64px;height:17px;background:#c8e6c8;line-height:17px;text-align:right;padding-right:3px;font-size:13px;">128.7</div>
<div class="a" style="left:300px;top:408px;width:64px;height:17px;background:#c8e6c8;line-height:17px;text-align:right;padding-right:3px;font-size:13px;">128.9</div>
<div class="a" style="left:364px;top:408px;width:64px;height:17px;background:#c8e6c8;line-height:17px;text-align:right;padding-right:3px;font-size:13px;">129.2</div>
<div class="a" style="left:428px;top:408px;width:64px;height:17px;background:#c8e6c8;line-height:17px;text-align:right;padding-right:3px;font-size:13px;">129.9</div>
<div class="a" style="left:492px;top:408px;width:64px;height:17px;background:#c8e6c8;line-height:17px;text-align:right;padding-right:3px;font-size:13px;">130.4</div>
<div class="a" style="left:556px;top:408px;width:64px;height:17px;background:#c8e6c8;line-height:17px;text-align:right;padding-right:3px;font-size:13px;">131.6</div>
<div class="a" style="left:620px;top:408px;width:64px;height:17px;background:#c8e6c8;line-height:17px;text-align:right;padding-right:3px;font-size:13px;">132.7</div>
<div class="a" style="left:684px;top:408px;width:64px;height:17px;background:#c8e6c8;line-height:17px;text-align:right;padding-right:3px;font-size:13px;">133.5</div>
<div class="a" style="left:748px;top:408px;width:64px;height:17px;background:#c8e6c8;line-height:17px;text-align:right;padding-right:3px;font-size:13px;">133.8</div>
<div class="a" style="left:812px;top:408px;width:64px;height:17px;background:#c8e6c8;line-height:17px;text-align:right;padding-right:3px;font-size:13px;">133.8</div>
<div class="a" style="left:876px;top:408px;width:64px;height:17px;background:#a8dcdc;line-height:17px;text-align:right;padding-right:3px;font-size:13px;">130.7</div>
<div class="a" style="left:44px;top:425px;width:64px;height:17px;background:#d9ecd9;line-height:17px;text-align:center;font-weight:bold;font-size:13px;">1991</div>
<div class="a" style="left:108px;top:425px;width:64px;height:17px;background:#fff;line-height:17px;text-align:right;padding-right:3px;font-size:13px;">134.6</div>
<div class="a" style="left:172px;top:425px;width:64px;height:17px;background:#fff;line-height:17px;text-align:right;padding-right:3px;font-size:13px;">134.8</div>
<div class="a" style="left:236px;top:425px;width:64px;height:17px;background:#fff;line-height:17px;text-align:right;padding-right:3px;font-size:13px;">135.0</div>
<div class="a" style="left:300px;top:425px;width:64px;height:17px;background:#fff;line-height:17px;text-align:right;padding-right:3px;font-size:13px;">135.2</div>
<div class="a" style="left:364px;top:425px;width:64px;height:17px;background:#fff;line-height:17px;text-align:right;padding-right:3px;font-size:13px;">135.6</div>
<div class="a" style="left:428px;top:425px;width:64px;height:17px;background:#fff;line-height:17px;text-align:right;padding-right:3px;font-size:13px;">136.0</div>
<div class="a" style="left:492px;top:425px;width:64px;height:17px;background:#fff;line-height:17px;text-align:right;padding-right:3px;font-size:13px;">136.2</div>
<div class="a" style="left:556px;top:425px;width:64px;height:17px;background:#fff;line-height:17px;text-align:right;padding-right:3px;font-size:13px;">136.6</div>
<div class="a" style="left:620px;top:425px;width:64px;height:17px;background:#fff;line-height:17px;text-align:right;padding-right:3px;font-size:13px;">137.2</div>
<div class="a" style="left:684px;top:425px;width:64px;height:17px;background:#fff;line-height:17px;text-align:right;padding-right:3px;font-size:13px;">137.4</div>
<div class="a" style="left:748px;top:425px;width:64px;height:17px;background:#fff;line-height:17px;text-align:right;padding-right:3px;font-size:13px;">137.8</div>
<div class="a" style="left:812px;top:425px;width:64px;height:17px;background:#fff;line-height:17px;text-align:right;padding-right:3px;font-size:13px;">137.9</div>
<div class="a" style="left:876px;top:425px;width:64px;height:17px;background:#c8e6c8;line-height:17px;text-align:right;padding-right:3px;font-size:13px;">136.2</div>
<div class="a" style="left:44px;top:442px;width:64px;height:17px;background:#d9ecd9;line-height:17px;text-align:center;font-weight:bold;font-size:13px;">1992</div>
<div class="a" style="left:108px;top:442px;width:64px;height:17px;background:#c8e6c8;line-height:17px;text-align:right;padding-right:3px;font-size:13px;">138.1</div>
<div class="a" style="left:172px;top:442px;width:64px;height:17px;background:#c8e6c8;line-height:17px;text-align:right;padding-right:3px;font-size:13px;">138.6</div>
<div class="a" style="left:236px;top:442px;width:64px;height:17px;background:#c8e6c8;line-height:17px;text-align:right;padding-right:3px;font-size:13px;">139.3</div>
<div class="a" style="left:300px;top:442px;width:64px;height:17px;background:#c8e6c8;line-height:17px;text-align:right;padding-right:3px;font-size:13px;">139.5</div>
<div class="a" style="left:364px;top:442px;width:64px;height:17px;background:#c8e6c8;line-height:17px;text-align:right;padding-right:3px;font-size:13px;">139.7</div>
<div class="a" style="left:428px;top:442px;width:64px;height:17px;background:#c8e6c8;line-height:17px;text-align:right;padding-right:3px;font-size:13px;">140.2</div>
<div class="a" style="left:492px;top:442px;width:64px;height:17px;background:#c8e6c8;line-height:17px;text-align:right;padding-right:3px;font-size:13px;">140.5</div>
<div class="a" style="left:556px;top:442px;width:64px;height:17px;background:#c8e6c8;line-height:17px;text-align:right;padding-right:3px;font-size:13px;">140.9</div>
<div class="a" style="left:620px;top:442px;width:64px;height:17px;background:#c8e6c8;line-height:17px;text-align:right;padding-right:3px;font-size:13px;">141.3</div>
<div class="a" style="left:684px;top:442px;width:64px;height:17px;background:#c8e6c8;line-height:17px;text-align:right;padding-right:3px;font-size:13px;">141.8</div>
<div class="a" style="left:748px;top:442px;width:64px;height:17px;background:#c8e6c8;line-height:17px;text-align:right;padding-right:3px;font-size:13px;">142.0</div>
<div class="a" style="left:812px;top:442px;width:64px;height:17px;background:#c8e6c8;line-height:17px;text-align:right;padding-right:3px;font-size:13px;">141.9</div>
<div class="a" style="left:876px;top:442px;width:64px;height:17px;background:#a8dcdc;line-height:17px;text-align:right;padding-right:3px;font-size:13px;">140.3</div>
<div class="a" style="left:44px;top:459px;width:64px;height:17px;background:#d9ecd9;line-height:17px;text-align:center;font-weight:bold;font-size:13px;">1993</div>
<div class="a" style="left:108px;top:459px;width:64px;height:17px;background:#fff;line-height:17px;text-align:right;padding-right:3px;font-size:13px;">142.6</div>
<div class="a" style="left:172px;top:459px;width:64px;height:17px;background:#fff;line-height:17px;text-align:right;padding-right:3px;font-size:13px;">143.1</div>
<div class="a" style="left:236px;top:459px;width:64px;height:17px;background:#fff;line-height:17px;text-align:right;padding-right:3px;font-size:13px;">143.6</div>
<div class="a" style="left:300px;top:459px;width:64px;height:17px;background:#fff;line-height:17px;text-align:right;padding-right:3px;font-size:13px;">144.0</div>
<div class="a" style="left:364px;top:459px;width:64px;height:17px;background:#fff;line-height:17px;text-align:right;padding-right:3px;font-size:13px;">144.2</div>
<div class="a" style="left:428px;top:459px;width:64px;height:17px;background:#fff;line-height:17px;text-align:right;padding-right:3px;font-size:13px;">144.4</div>
<div class="a" style="left:492px;top:459px;width:64px;height:17px;background:#fff;line-height:17px;text-align:right;padding-right:3px;font-size:13px;">144.4</div>
<div class="a" style="left:556px;top:459px;width:64px;height:17px;background:#fff;line-height:17px;text-align:right;padding-right:3px;font-size:13px;">144.8</div>
<div class="a" style="left:620px;top:459px;width:64px;height:17px;background:#fff;line-height:17px;text-align:right;padding-right:3px;font-size:13px;">145.1</div>
<div class="a" style="left:684px;top:459px;width:64px;height:17px;background:#fff;line-height:17px;text-align:right;padding-right:3px;font-size:13px;">145.7</div>
<div class="a" style="left:748px;top:459px;width:64px;height:17px;background:#fff;line-height:17px;text-align:right;padding-right:3px;font-size:13px;">145.8</div>
<div class="a" style="left:812px;top:459px;width:64px;height:17px;background:#fff;line-height:17px;text-align:right;padding-right:3px;font-size:13px;">145.8</div>
<div class="a" style="left:876px;top:459px;width:64px;height:17px;background:#c8e6c8;line-height:17px;text-align:right;padding-right:3px;font-size:13px;">144.5</div>
<div class="a" style="left:44px;top:476px;width:64px;height:17px;background:#d9ecd9;line-height:17px;text-align:center;font-weight:bold;font-size:13px;">1994</div>
<div class="a" style="left:108px;top:476px;width:64px;height:17px;background:#c8e6c8;line-height:17px;text-align:right;padding-right:3px;font-size:13px;">146.2</div>
<div class="a" style="left:172px;top:476px;width:64px;height:17px;background:#c8e6c8;line-height:17px;text-align:right;padding-right:3px;font-size:13px;">146.7</div>
<div class="a" style="left:236px;top:476px;width:64px;height:17px;background:#c8e6c8;line-height:17px;text-align:right;padding-right:3px;font-size:13px;">147.2</div>
<div class="a" style="left:300px;top:476px;width:64px;height:17px;background:#c8e6c8;line-height:17px;text-align:right;padding-right:3px;font-size:13px;">147.4</div>
<div class="a" style="left:364px;top:476px;width:64px;height:17px;background:#c8e6c8;line-height:17px;text-align:right;padding-right:3px;font-size:13px;">147.5</div>
<div class="a" style="left:428px;top:476px;width:64px;height:17px;background:#c8e6c8;line-height:17px;text-align:right;padding-right:3px;font-size:13px;">148.0</div>
<div class="a" style="left:492px;top:476px;width:64px;height:17px;background:#c8e6c8;line-height:17px;text-align:right;padding-right:3px;font-size:13px;">148.4</div>
<div class="a" style="left:556px;top:476px;width:64px;height:17px;background:#c8e6c8;line-height:17px;text-align:right;padding-right:3px;font-size:13px;">149.0</div>
<div class="a" style="left:620px;top:476px;width:64px;height:17px;background:#c8e6c8;line-height:17px;text-align:right;padding-right:3px;font-size:13px;">149.4</div>
<div class="a" style="left:684px;top:476px;width:64px;height:17px;background:#c8e6c8;line-height:17px;text-align:right;padding-right:3px;font-size:13px;">149.5</div>
<div class="a" style="left:748px;top:476px;width:64px;height:17px;background:#c8e6c8;line-height:17px;text-align:right;padding-right:3px;font-size:13px;">149.7</div>
<div class="a" style="left:812px;top:476px;width:64px;height:17px;background:#c8e6c8;line-height:17px;text-align:right;padding-right:3px;font-size:13px;">149.7</div>
<div class="a" style="left:876px;top:476px;width:64px;height:17px;background:#a8dcdc;line-height:17px;text-align:right;padding-right:3px;font-size:13px;">148.2</div>
<div class="a" style="left:44px;top:493px;width:64px;height:17px;background:#d9ecd9;line-height:17px;text-align:center;font-weight:bold;font-size:13px;">1995</div>
<div class="a" style="left:108px;top:493px;width:64px;height:17px;background:#fff;line-height:17px;text-align:right;padding-right:3px;font-size:13px;">150.3</div>
<div class="a" style="left:172px;top:493px;width:64px;height:17px;background:#fff;line-height:17px;text-align:right;padding-right:3px;font-size:13px;">150.9</div>
<div class="a" style="left:236px;top:493px;width:64px;height:17px;background:#fff;line-height:17px;text-align:right;padding-right:3px;font-size:13px;">151.4</div>
<div class="a" style="left:300px;top:493px;width:64px;height:17px;background:#fff;line-height:17px;text-align:right;padding-right:3px;font-size:13px;">151.9</div>
<div class="a" style="left:364px;top:493px;width:64px;height:17px;background:#fff;line-height:17px;text-align:right;padding-right:3px;font-size:13px;">152.2</div>
<div class="a" style="left:428px;top:493px;width:64px;height:17px;background:#fff;line-height:17px;text-align:right;padding-right:3px;font-size:13px;">152.5</div>
<div class="a" style="left:492px;top:493px;width:64px;height:17px;background:#fff;line-height:17px;text-align:right;padding-right:3px;font-size:13px;">152.5</div>
<div class="a" style="left:556px;top:493px;width:64px;height:17px;background:#fff;line-height:17px;text-align:right;padding-right:3px;font-size:13px;">152.9</div>
<div class="a" style="left:620px;top:493px;width:64px;height:17px;background:#fff;line-height:17px;text-align:right;padding-right:3px;font-size:13px;">153.2</div>
<div class="a" style="left:684px;top:493px;width:64px;height:17px;background:#fff;line-height:17px;text-align:right;padding-right:3px;font-size:13px;">153.7</div>
<div class="a" style="left:748px;top:493px;width:64px;height:17px;background:#fff;line-height:17px;text-align:right;padding-right:3px;font-size:13px;">153.6</div>
<div class="a" style="left:812px;top:493px;width:64px;height:17px;background:#fff;line-height:17px;text-align:right;padding-right:3px;font-size:13px;">153.5</div>
<div class="a" style="left:876px;top:493px;width:64px;height:17px;background:#c8e6c8;line-height:17px;text-align:right;padding-right:3px;font-size:13px;">152.4</div>
<div class="a" style="left:44px;top:510px;width:64px;height:17px;background:#d9ecd9;line-height:17px;text-align:center;font-weight:bold;font-size:13px;">1996</div>
<div class="a" style="left:108px;top:510px;width:64px;height:17px;background:#c8e6c8;line-height:17px;text-align:right;padding-right:3px;font-size:13px;">154.4</div>
<div class="a" style="left:172px;top:510px;width:64px;height:17px;background:#c8e6c8;line-height:17px;text-align:right;padding-right:3px;font-size:13px;">154.9</div>
<div class="a" style="left:236px;top:510px;width:64px;height:17px;background:#c8e6c8;line-height:17px;text-align:right;padding-right:3px;font-size:13px;">155.7</div>
<div class="a" style="left:300px;top:510px;width:64px;height:17px;background:#c8e6c8;line-height:17px;text-align:right;padding-right:3px;font-size:13px;">156.3</div>
<div class="a" style="left:364px;top:510px;width:64px;height:17px;background:#c8e6c8;line-height:17px;text-align:right;padding-right:3px;font-size:13px;">156.6</div>
<div class="a" style="left:428px;top:510px;width:64px;height:17px;background:#c8e6c8;line-height:17px;text-align:right;padding-right:3px;font-size:13px;">156.7</div>
<div class="a" style="left:492px;top:510px;width:64px;height:17px;background:#c8e6c8;line-height:17px;text-align:right;padding-right:3px;font-size:13px;">157.0</div>
<div class="a" style="left:556px;top:510px;width:64px;height:17px;background:#c8e6c8;line-height:17px;text-align:right;padding-right:3px;font-size:13px;">157.3</div>
<div class="a" style="left:620px;top:510px;width:64px;height:17px;background:#c8e6c8;line-height:17px;text-align:right;padding-right:3px;font-size:13px;">157.8</div>
<div class="a" style="left:684px;top:510px;width:64px;height:17px;background:#c8e6c8;line-height:17px;text-align:right;padding-right:3px;font-size:13px;">158.3</div>
<div class="a" style="left:748px;top:510px;width:64px;height:17px;background:#c8e6c8;line-height:17px;text-align:right;padding-right:3px;font-size:13px;">158.6</div>
<div class="a" style="left:812px;top:510px;width:64px;height:17px;background:#c8e6c8;line-height:17px;text-align:right;padding-right:3px;font-size:13px;">158.6</div>
<div class="a" style="left:876px;top:510px;width:64px;height:17px;background:#a8dcdc;line-height:17px;text-align:right;padding-right:3px;font-size:13px;">156.9</div>
<div class="a" style="left:44px;top:527px;width:64px;height:17px;background:#d9ecd9;line-height:17px;text-align:center;font-weight:bold;font-size:13px;">1997</div>
<div class="a" style="left:108px;top:527px;width:64px;height:17px;background:#fff;line-height:17px;text-align:right;padding-right:3px;font-size:13px;">159.1</div>
<div class="a" style="left:172px;top:527px;width:64px;height:17px;background:#fff;line-height:17px;text-align:right;padding-right:3px;font-size:13px;">159.6</div>
<div class="a" style="left:236px;top:527px;width:64px;height:17px;background:#fff;line-height:17px;text-align:right;padding-right:3px;font-size:13px;">160.0</div>
<div class="a" style="left:300px;top:527px;width:64px;height:17px;background:#fff;line-height:17px;text-align:right;padding-right:3px;font-size:13px;">160.2</div>
<div class="a" style="left:364px;top:527px;width:64px;height:17px;background:#fff;line-height:17px;text-align:right;padding-right:3px;font-size:13px;">160.1</div>
<div class="a" style="left:428px;top:527px;width:64px;height:17px;background:#fff;line-height:17px;text-align:right;padding-right:3px;font-size:13px;">160.3</div>
<div class="a" style="left:492px;top:527px;width:64px;height:17px;background:#fff;line-height:17px;text-align:right;padding-right:3px;font-size:13px;">160.5</div>
<div class="a" style="left:556px;top:527px;width:64px;height:17px;background:#fff;line-height:17px;text-align:right;padding-right:3px;font-size:13px;">160.8</div>
<div class="a" style="left:620px;top:527px;width:64px;height:17px;background:#fff;line-height:17px;text-align:right;padding-right:3px;font-size:13px;">161.2</div>
<div class="a" style="left:684px;top:527px;width:64px;height:17px;background:#fff;line-height:17px;text-align:right;padding-right:3px;font-size:13px;">161.6</div>
<div class="a" style="left:748px;top:527px;width:64px;height:17px;background:#fff;line-height:17px;text-align:right;padding-right:3px;font-size:13px;">161.5</div>
<div class="a" style="left:812px;top:527px;width:64px;height:17px;background:#fff;line-height:17px;text-align:right;padding-right:3px;font-size:13px;">161.3</div>
<div class="a" style="left:876px;top:527px;width:64px;height:17px;background:#c8e6c8;line-height:17px;text-align:right;padding-right:3px;font-size:13px;">160.5</div>
<div class="a" style="left:44px;top:407px;width:896px;height:1px;background:#000"></div>
<div class="a" style="left:107px;top:391px;width:1px;height:151px;background:#000"></div>
<div class="a" style="left:875px;top:391px;width:1px;height:151px;background:#000"></div>
<div class="a" style="left:939px;top:391px;width:1px;height:151px;background:#000"></div>
<div class="a" style="left:426px;top:270px;width:67px;height:2px;background:#000"></div>
<div class="a" style="left:426px;top:270px;width:2px;height:20px;background:#000"></div>
<div class="a" style="left:491px;top:270px;width:2px;height:14px;background:#000"></div>
<div class="a" style="left:426px;top:288px;width:61px;height:2px;background:#000"></div>
<div class="a" style="left:488px;top:285px;width:7px;height:7px;background:#fff"></div>
<div class="a" style="left:489px;top:286px;width:5px;height:5px;background:#000"></div>
</div>
<div class="a" style="left:1029px;top:163px;width:16px;height:542px;background:linear-gradient(90deg,#f3f1ec,#fefefb)"></div>
<div class="a" style="left:1030px;top:163px;width:15px;height:15px;background:linear-gradient(135deg,#dce8fd,#c0d3f9 60%,#b0c6f6);border:1px solid #fff;border-radius:2px;box-shadow:inset 0 0 0 1px #c4d4f4"></div>
<svg class="a" style="left:0;top:0;overflow:visible" width="1" height="1"><path d="M1033.5 172.5 L1037.5 168.5 L1041.5 172.5" stroke="#4d6185" stroke-width="2.2" fill="none"/></svg>
<div class="a" style="left:1030px;top:179px;width:15px;height:16px;background:linear-gradient(135deg,#dce8fd,#c0d3f9 60%,#b0c6f6);border:1px solid #fff;border-radius:2px;box-shadow:inset 0 0 0 1px #c4d4f4"></div>
<svg class="a" style="left:1034px;top:184px" width="8" height="9"><rect x="0" y="0" width="7" height="1" fill="#eef4fe"/><rect x="1" y="1" width="7" height="1" fill="#8cb0f8"/><rect x="0" y="2" width="7" height="1" fill="#eef4fe"/><rect x="1" y="3" width="7" height="1" fill="#8cb0f8"/><rect x="0" y="4" width="7" height="1" fill="#eef4fe"/><rect x="1" y="5" width="7" height="1" fill="#8cb0f8"/><rect x="0" y="6" width="7" height="1" fill="#eef4fe"/><rect x="1" y="7" width="7" height="1" fill="#8cb0f8"/></svg>
<div class="a" style="left:1030px;top:689px;width:15px;height:15px;background:linear-gradient(135deg,#dce8fd,#c0d3f9 60%,#b0c6f6);border:1px solid #fff;border-radius:2px;box-shadow:inset 0 0 0 1px #c4d4f4"></div>
<svg class="a" style="left:0;top:0;overflow:visible" width="1" height="1"><path d="M1033.5 694.5 L1037.5 698.5 L1041.5 694.5" stroke="#4d6185" stroke-width="2.2" fill="none"/></svg>
<div class="a" style="left:4px;top:705px;width:613px;height:16px;background:#c0c0c0"></div>
<div class="a" style="left:106px;top:705px;width:511px;height:1px;background:#000"></div>
<div class="a" style="left:5px;top:706px;width:13px;height:15px;background:linear-gradient(135deg,#dce8fd,#c0d3f9 60%,#b0c6f6);border:1px solid #fff;border-radius:2px;box-shadow:inset 0 0 0 1px #c4d4f4"></div>
<svg class="a" style="left:0;top:0;overflow:visible" width="1" height="1"><path d="M13.5 709.5 L9.5 713.5 L13.5 717.5" stroke="#4d6185" stroke-width="2.2" fill="none"/></svg>
<div class="a" style="left:22px;top:706px;width:14px;height:15px;background:linear-gradient(135deg,#dce8fd,#c0d3f9 60%,#b0c6f6);border:1px solid #fff;border-radius:2px;box-shadow:inset 0 0 0 1px #c4d4f4"></div>
<svg class="a" style="left:0;top:0;overflow:visible" width="1" height="1"><path d="M27.0 709.5 L31.0 713.5 L27.0 717.5" stroke="#4d6185" stroke-width="2.2" fill="none"/></svg>
<svg class="a" style="left:37px;top:705px" width="72" height="16"><path d="M1.5 0 L8.5 15.5 H61.5 L69 0 Z" fill="#fff"/><path d="M1.5 0 L8.5 15.5 H61.5 L69 0" fill="none" stroke="#000" stroke-width="1"/></svg>
<div class="t" style="left:51px;top:707px;font-size:13px">Sheet1</div>
<div class="a" style="left:615px;top:705px;width:3px;height:16px;background:#ece9d8;border-left:1px solid #000;border-right:1px solid #808080"></div>
<div class="a" style="left:618px;top:705px;width:411px;height:16px;background:linear-gradient(#f3f1ec,#fefefb)"></div>
<div class="a" style="left:619px;top:706px;width:15px;height:15px;background:linear-gradient(135deg,#dce8fd,#c0d3f9 60%,#b0c6f6);border:1px solid #fff;border-radius:2px;box-shadow:inset 0 0 0 1px #c4d4f4"></div>
<svg class="a" style="left:0;top:0;overflow:visible" width="1" height="1"><path d="M628.5 709.5 L624.5 713.5 L628.5 717.5" stroke="#4d6185" stroke-width="2.2" fill="none"/></svg>
<div class="a" style="left:636px;top:706px;width:17px;height:15px;background:linear-gradient(135deg,#dce8fd,#c0d3f9 60%,#b0c6f6);border:1px solid #fff;border-radius:2px;box-shadow:inset 0 0 0 1px #c4d4f4"></div>
<svg class="a" style="left:640px;top:710px" width="9" height="8"><rect x="0" y="0" width="1" height="7" fill="#eef4fe"/><rect x="1" y="1" width="1" height="7" fill="#8cb0f8"/><rect x="2" y="0" width="1" height="7" fill="#eef4fe"/><rect x="3" y="1" width="1" height="7" fill="#8cb0f8"/><rect x="4" y="0" width="1" height="7" fill="#eef4fe"/><rect x="5" y="1" width="1" height="7" fill="#8cb0f8"/><rect x="6" y="0" width="1" height="7" fill="#eef4fe"/><rect x="7" y="1" width="1" height="7" fill="#8cb0f8"/></svg>
<div class="a" style="left:1013px;top:706px;width:15px;height:15px;background:linear-gradient(135deg,#dce8fd,#c0d3f9 60%,#b0c6f6);border:1px solid #fff;border-radius:2px;box-shadow:inset 0 0 0 1px #c4d4f4"></div>
<svg class="a" style="left:0;top:0;overflow:visible" width="1" height="1"><path d="M1018.5 709.5 L1022.5 713.5 L1018.5 717.5" stroke="#4d6185" stroke-width="2.2" fill="none"/></svg>
<div class="a" style="left:1029px;top:705px;width:16px;height:16px;background:#c0c0c0"></div>
<div class="a" style="left:4px;top:721px;width:1239px;height:22px;background:#ece9d8"></div>
<div class="a" style="left:122px;top:724px;width:1px;height:17px;background:#c8c4b0"></div>
<div class="a" style="left:123px;top:724px;width:1px;height:17px;background:#fff"></div>
<div class="a" style="left:182px;top:724px;width:1px;height:17px;background:#c8c4b0"></div>
<div class="a" style="left:183px;top:724px;width:1px;height:17px;background:#fff"></div>
<div class="a" style="left:227px;top:724px;width:1px;height:17px;background:#c8c4b0"></div>
<div class="a" style="left:228px;top:724px;width:1px;height:17px;background:#fff"></div>
<div class="a" style="left:272px;top:724px;width:1px;height:17px;background:#c8c4b0"></div>
<div class="a" style="left:273px;top:724px;width:1px;height:17px;background:#fff"></div>
<div class="a" style="left:333px;top:724px;width:1px;height:17px;background:#c8c4b0"></div>
<div class="a" style="left:334px;top:724px;width:1px;height:17px;background:#fff"></div>
<div class="a" style="left:407px;top:724px;width:1px;height:17px;background:#c8c4b0"></div>
<div class="a" style="left:408px;top:724px;width:1px;height:17px;background:#fff"></div>
<div class="a" style="left:528px;top:724px;width:1px;height:17px;background:#c8c4b0"></div>
<div class="a" style="left:529px;top:724px;width:1px;height:17px;background:#fff"></div>
<div class="a" style="left:707px;top:724px;width:1px;height:17px;background:#c8c4b0"></div>
<div class="a" style="left:708px;top:724px;width:1px;height:17px;background:#fff"></div>
<div class="a" style="left:858px;top:724px;width:1px;height:17px;background:#c8c4b0"></div>
<div class="a" style="left:859px;top:724px;width:1px;height:17px;background:#fff"></div>
<div class="a" style="left:983px;top:724px;width:1px;height:17px;background:#c8c4b0"></div>
<div class="a" style="left:984px;top:724px;width:1px;height:17px;background:#fff"></div>
<div class="a" style="left:1240px;top:725px;width:1px;height:16px;background:#c8c4b0"></div>
<div class="t" style="left:20px;top:728px;font-size:11px;color:#000">Row:&nbsp; 16&nbsp;&nbsp; Col:&nbsp;&nbsp; 7</div>
<div class="t" style="left:134px;top:728px;font-size:11px;color:#000">Modified</div>
<div class="t" style="left:195px;top:728px;font-size:11px;color:#000">NUM</div>
<div class="t" style="left:353px;top:728px;font-size:11px;color:#000">INSERT</div>
<div class="t" style="left:419px;top:728px;font-size:11px;color:#000">2 Document(s) Open</div>
<div class="t" style="left:550px;top:728px;font-size:11px;color:#000">R: 4.498 mm&nbsp;&nbsp; C: 16.951 mm</div>
<div class="t" style="left:733px;top:728px;font-size:11px;color:#000">R: 0.177"&nbsp;&nbsp; C: 0.667"</div>
<div class="t" style="left:886px;top:728px;font-size:11px;color:#000">R: 1&nbsp; C: 1&nbsp; T: 1</div>
<div class="t" style="left:987px;top:728px;font-size:11px;color:#000">G16</div>
<div class="a" style="left:1045px;top:134px;width:198px;height:587px;background:#ece9d8"></div>
<div class="a" style="left:1047px;top:136px;width:63px;height:19px;background:linear-gradient(#fefefe,#f4f3ee 60%,#e8e6dc);border:1px solid #919b9c;border-bottom:none;border-radius:3px 3px 0 0"></div>
<div class="t" style="left:1053px;top:140px;font-size:12px;letter-spacing:-0.5px">Worksheet</div>
<div class="a" style="left:1111px;top:136px;width:41px;height:19px;background:linear-gradient(#fefefe,#f4f3ee 60%,#e8e6dc);border:1px solid #919b9c;border-bottom:none;border-radius:3px 3px 0 0"></div>
<div class="t" style="left:1117px;top:140px;font-size:12px;letter-spacing:-0.5px">Table</div>
<div class="a" style="left:1153px;top:136px;width:40px;height:19px;background:linear-gradient(#fefefe,#f4f3ee 60%,#e8e6dc);border:1px solid #919b9c;border-bottom:none;border-radius:3px 3px 0 0"></div>
<div class="t" style="left:1159px;top:140px;font-size:12px;letter-spacing:-0.5px">Data</div>
<div class="a" style="left:1193px;top:134px;width:46px;height:21px;background:#fcfcfe;border:1px solid #919b9c;border-bottom:none;border-radius:3px 3px 0 0"></div>
<div class="a" style="left:1194px;top:134px;width:44px;height:2px;background:#e68b2c;border-radius:2px 2px 0 0"></div>
<div class="a" style="left:1194px;top:136px;width:44px;height:1px;background:#ffc73c"></div>
<div class="t" style="left:1201.5px;top:138px;font-size:12px;letter-spacing:-0.5px">Map</div>
<div class="a" style="left:1045px;top:154px;width:196px;height:564px;background:#fcfcfe;border:1px solid #919b9c"></div>
<div class="a" style="left:1049px;top:158px;width:190px;height:559px;background:#f3f3f3;border:1px solid #8a8a8a;box-shadow:inset 1px 1px 0 #fff,inset -1px -1px 0 #fafafa"></div>
<svg class="a" style="left:1222px;top:166px" width="10" height="8"><path d="M1 0.5 L9 7.5 M9 0.5 L1 7.5" stroke="#000" stroke-width="1.8"/></svg>
<div class="t" style="left:1053px;top:175.5px;font-size:13px;color:#8c8c8c">Value Intensity Colour Mapping</div>
<div class="t" style="left:1068px;top:257px;font-size:13px;color:#8c8c8c">Single Colour Progression</div>
<div class="t" style="left:1063px;top:428px;font-size:13px;color:#8c8c8c">Bi-Polar Colour Progression</div>
<div class="a" style="left:1146px;top:198px;width:1px;height:40px;background:#aca899"></div>
<div class="a" style="left:1072px;top:248px;width:150px;height:1px;background:#aca899"></div>
<div class="a" style="left:1146px;top:326px;width:1px;height:81px;background:#aca899"></div>
<div class="a" style="left:1072px;top:418px;width:150px;height:1px;background:#aca899"></div>
<div class="a" style="left:1146px;top:446px;width:1px;height:120px;background:#aca899"></div>
<svg class="a" style="left:1094px;top:205px;overflow:visible" width="30" height="27" viewBox="0 0 30 27"><defs><linearGradient id="wi" x1="0" y1="0" x2="1" y2="1"><stop offset="0" stop-color="#fff"/><stop offset="1" stop-color="#e4e4e4"/></linearGradient></defs><path d="M1.5 1.5 H15 L16.5 3.5 H28.5 V25.5 H1.5 Z" fill="url(#wi)" stroke="#8a8a8a"/><rect x="2" y="2" width="13" height="4" fill="#6a94e0"/><rect x="16" y="4" width="12" height="2.5" fill="#c8d8f0"/><path d="M2 6.5 H28" stroke="#9aaac8"/></svg>
<svg class="a" style="left:1164px;top:201px;overflow:visible" width="34" height="34" viewBox="0 0 34 34"><ellipse cx="13" cy="12" rx="12.5" ry="10.5" fill="#d8b070" stroke="#3a2a10"/><circle cx="9" cy="16" r="2" fill="#3a2a10"/><circle cx="8" cy="6" r="2.2" fill="#6a4ad0"/><circle cx="14" cy="4.5" r="2.2" fill="#a040c0"/><circle cx="20" cy="6" r="2.2" fill="#e03030"/><circle cx="22" cy="11" r="2" fill="#f0c030"/><circle cx="5" cy="12" r="2.4" fill="#30a030"/><rect x="17" y="15" width="16" height="18" fill="#f4f4f4" stroke="#a01818" stroke-width="1.5"/><rect x="17" y="15" width="16" height="4" fill="#c82020"/><rect x="19" y="22" width="6" height="3" fill="#5a8ae0"/><rect x="19" y="27" width="6" height="3" fill="#5a8ae0"/><path d="M2 1 L28 30" stroke="#f0c020" stroke-width="2.4"/><path d="M2 1 L8 8" stroke="#6a6aa0" stroke-width="2.4"/></svg>
<svg width="0" height="0" style="position:absolute"><defs><linearGradient id="gO" x1="0" y1="0" x2="0" y2="1"><stop offset="0" stop-color="#c8c8c8"/><stop offset=".48" stop-color="#a0a0a0"/><stop offset=".52" stop-color="#6a6a6a"/><stop offset="1" stop-color="#8a8a8a"/></linearGradient><linearGradient id="gS" x1="0" y1="0" x2="0" y2="1"><stop offset="0" stop-color="#f4f4f4"/><stop offset="1" stop-color="#d0d0d0"/></linearGradient><linearGradient id="gB" x1="0" y1="0" x2="0" y2="1"><stop offset="0" stop-color="#8ac0ff"/><stop offset=".45" stop-color="#3a8af0"/><stop offset="1" stop-color="#2a70d8"/></linearGradient><linearGradient id="gG" x1="0" y1="0" x2="0" y2="1"><stop offset="0" stop-color="#40a840"/><stop offset="1" stop-color="#2a9030"/></linearGradient><linearGradient id="gY" x1="0" y1="0" x2="0" y2="1"><stop offset="0" stop-color="#fff080"/><stop offset=".5" stop-color="#f0d040"/><stop offset="1" stop-color="#d8a820"/></linearGradient><radialGradient id="gBr" cx=".5" cy=".55" r=".6"><stop offset="0" stop-color="#e09030"/><stop offset="1" stop-color="#8a5010"/></radialGradient><linearGradient id="gM" x1="0" y1="0" x2="0" y2="1"><stop offset="0" stop-color="#ff90ff"/><stop offset=".5" stop-color="#e060e0"/><stop offset="1" stop-color="#b040b8"/></linearGradient><linearGradient id="bpB" x1="0" y1="0" x2="0" y2="1"><stop offset="0" stop-color="#ff7000"/><stop offset=".5" stop-color="#c84000"/><stop offset=".5" stop-color="#3a78e0"/><stop offset="1" stop-color="#88aaff"/></linearGradient><linearGradient id="bpG" x1="0" y1="0" x2="0" y2="1"><stop offset="0" stop-color="#ff7000"/><stop offset=".5" stop-color="#c84000"/><stop offset=".5" stop-color="#10b030"/><stop offset="1" stop-color="#68ff78"/></linearGradient></defs></svg>
<svg class="a" style="left:1085px;top:282px;overflow:visible" width="32" height="32" viewBox="0 0 32 32"><path d="M9.5 0.5 H21.5 L30.5 9.5 V21.5 L21.5 30.5 H9.5 L0.5 21.5 V9.5 Z" fill="url(#gO)" stroke="#303030"/><text x="16" y="20" font-family="Liberation Sans" font-weight="bold" font-size="11" fill="#fff" text-anchor="middle">X &lt; Y</text></svg>
<svg class="a" style="left:1129px;top:282px;overflow:visible" width="32" height="32" viewBox="0 0 32 32"><rect x="0.5" y="0.5" width="31" height="31" rx="2" fill="url(#gS)" stroke="#8a8a8a"/><text x="16" y="20" font-family="Liberation Sans" font-weight="bold" font-size="11" fill="#404040" text-anchor="middle">X &lt; Y</text></svg>
<svg class="a" style="left:1174px;top:282px;overflow:visible" width="32" height="32" viewBox="0 0 32 32"><rect x="0.5" y="0.5" width="31" height="31" rx="7" fill="url(#gB)" stroke="#2a60c0"/><text x="16" y="20" font-family="Liberation Sans" font-weight="bold" font-size="11" fill="#fff" text-anchor="middle">X &lt; Y</text></svg>
<svg class="a" style="left:1093px;top:330px;overflow:visible" width="32" height="32" viewBox="0 0 32 32"><rect x="0.5" y="0.5" width="31" height="31" rx="2" fill="url(#gG)" stroke="#1a7020"/><text x="16" y="20" font-family="Liberation Sans" font-weight="bold" font-size="11" fill="#fff" text-anchor="middle">X &lt; Y</text></svg>
<svg class="a" style="left:1165px;top:330px;overflow:visible" width="32" height="32" viewBox="0 0 32 32"><rect x="0.5" y="0.5" width="31" height="31" rx="2" fill="url(#gY)" stroke="#c09020"/><text x="16" y="20" font-family="Liberation Sans" font-weight="bold" font-size="11" fill="#333" text-anchor="middle">X &lt; Y</text></svg>
<svg class="a" style="left:1093px;top:370px;overflow:visible" width="32" height="32" viewBox="0 0 32 32"><circle cx="15.5" cy="15.5" r="15.5" fill="#fff"/><circle cx="15.5" cy="15.5" r="14" fill="url(#gBr)" stroke="#6a4010"/><ellipse cx="12" cy="8" rx="6" ry="3" fill="#fff" opacity=".35"/><text x="16" y="20" font-family="Liberation Sans" font-weight="bold" font-size="11" fill="#fff" text-anchor="middle">X &lt; Y</text></svg>
<svg class="a" style="left:1165px;top:370px;overflow:visible" width="32" height="32" viewBox="0 0 32 32"><rect x="0.5" y="0.5" width="31" height="31" rx="7" fill="url(#gM)" stroke="#9030a0"/><text x="16" y="20" font-family="Liberation Sans" font-weight="bold" font-size="11" fill="#fff" text-anchor="middle">X &lt; Y</text></svg>
<svg class="a" style="left:1093px;top:450px;overflow:visible" width="32" height="32" viewBox="0 0 32 32"><rect x="0.5" y="0.5" width="31" height="31" rx="2" fill="url(#bpB)" stroke="#303030"/><text x="16" y="21" font-family="Liberation Sans" font-weight="bold" font-size="13" fill="#fff" text-anchor="middle">%50</text></svg>
<svg class="a" style="left:1165px;top:450px;overflow:visible" width="32" height="32" viewBox="0 0 32 32"><rect x="0.5" y="0.5" width="31" height="31" rx="2" fill="url(#bpG)" stroke="#303030"/><text x="16" y="21" font-family="Liberation Sans" font-weight="bold" font-size="13" fill="#fff" text-anchor="middle">%50</text></svg>
<svg class="a" style="left:1093px;top:490px;overflow:visible" width="32" height="32" viewBox="0 0 32 32"><rect x="0.5" y="0.5" width="31" height="31" rx="2" fill="url(#bpB)" stroke="#303030"/><text x="16" y="21" font-family="Liberation Sans" font-weight="bold" font-size="13" fill="#fff" text-anchor="middle">% X</text></svg>
<svg class="a" style="left:1165px;top:490px;overflow:visible" width="32" height="32" viewBox="0 0 32 32"><rect x="0.5" y="0.5" width="31" height="31" rx="2" fill="url(#bpG)" stroke="#303030"/><text x="16" y="21" font-family="Liberation Sans" font-weight="bold" font-size="13" fill="#fff" text-anchor="middle">% X</text></svg>
<svg class="a" style="left:1093px;top:530px;overflow:visible" width="32" height="32" viewBox="0 0 32 32"><rect x="0.5" y="0.5" width="31" height="31" rx="2" fill="url(#bpB)" stroke="#303030"/><text x="16" y="21" font-family="Liberation Sans" font-weight="bold" font-size="13" fill="#fff" text-anchor="middle">- 0 -</text></svg>
<svg class="a" style="left:1165px;top:530px;overflow:visible" width="32" height="32" viewBox="0 0 32 32"><rect x="0.5" y="0.5" width="31" height="31" rx="2" fill="url(#bpG)" stroke="#303030"/><text x="16" y="21" font-family="Liberation Sans" font-weight="bold" font-size="13" fill="#fff" text-anchor="middle">- 0 -</text></svg>
<div class="a" style="left:1069px;top:580px;width:13px;height:13px;background:linear-gradient(135deg,#dcdcd6,#fff);border:1px solid #1c5180"></div>
<svg class="a" style="left:1071px;top:582px" width="9" height="9"><path d="M1 4 L3.5 7 L8 1.5" stroke="#21a121" stroke-width="2" fill="none"/></svg>
<div class="t" style="left:1089px;top:580px;font-size:13px;color:#000">Low Intensity Mapping</div></body></html>
